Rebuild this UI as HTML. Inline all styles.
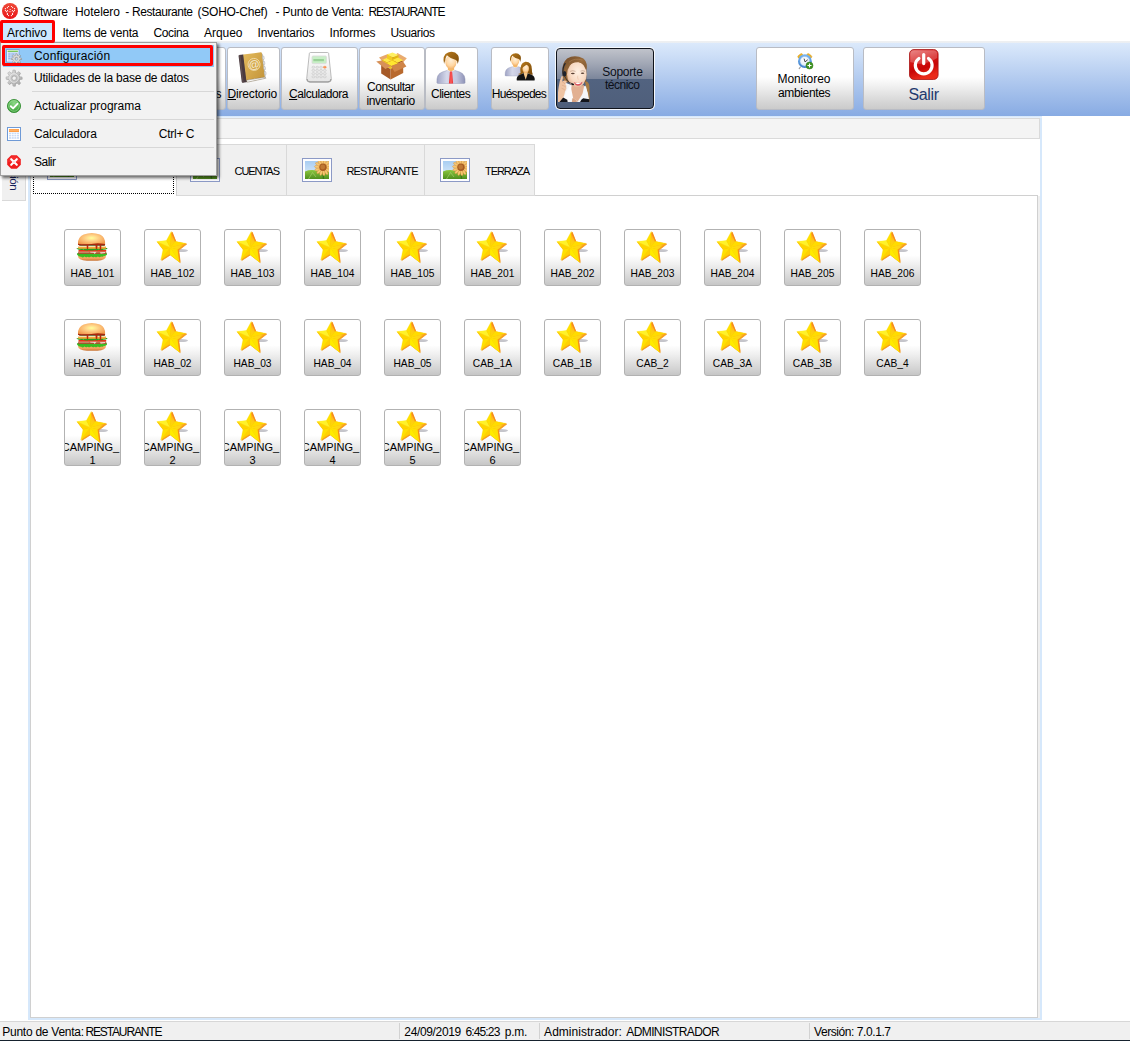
<!DOCTYPE html>
<html lang="es"><head><meta charset="utf-8"><title>Software Hotelero - Restaurante (SOHO-Chef)</title>
<style>
html,body{margin:0;padding:0;background:#fff;}
body{width:1130px;height:1041px;position:relative;overflow:hidden;font-family:"Liberation Sans",sans-serif;font-size:12px;color:#000;}
.a{position:absolute;box-sizing:border-box;}
.t{position:absolute;white-space:nowrap;font-family:"Liberation Sans",sans-serif;}
.i{position:absolute;overflow:visible;}
.tb{position:absolute;box-sizing:border-box;top:47px;height:63px;border:1px solid #b9bcc4;border-radius:3px;background:linear-gradient(#ffffff 0,#ffffff 47%,#f1f1f1 62%,#d6d6d6 88%,#cbcbcb 100%);}
.tile{position:absolute;box-sizing:border-box;width:57px;height:57px;border:1px solid #b2b2b2;border-radius:3px;background:linear-gradient(#ffffff 0,#ffffff 46%,#f0f0f0 62%,#d2d2d2 90%,#c6c6c6 100%);overflow:hidden;}
.tl{position:absolute;left:0;top:0;width:55px;font-size:11px;line-height:13.5px;text-align:center;white-space:nowrap;color:#000;transform:scaleX(0.93);transform-origin:27.3px 0;}
.tl2{position:absolute;left:-12px;width:75px;font-size:11px;line-height:13.5px;text-align:center;white-space:nowrap;color:#000;}
.sep{position:absolute;left:32px;width:182px;height:1px;background:#d7d7d7;}
</style></head>
<body>

<svg width="0" height="0" style="position:absolute">
<defs>
<linearGradient id="gStarO" x1="0.4" y1="0" x2="0.3" y2="1"><stop offset="0" stop-color="#ff8a1e"/><stop offset="0.45" stop-color="#ffc21a"/><stop offset="1" stop-color="#ffe000"/></linearGradient><linearGradient id="gStarR" x1="1" y1="0.5" x2="0" y2="0.5"><stop offset="0" stop-color="#ff9a1e"/><stop offset="0.4" stop-color="#ffd21a"/><stop offset="1" stop-color="#ffe400"/></linearGradient>
<radialGradient id="gBun" cx="0.45" cy="0.3" r="0.7"><stop offset="0" stop-color="#ffd9a0"/><stop offset="0.55" stop-color="#f6a24a"/><stop offset="1" stop-color="#d9782a"/></radialGradient>
<linearGradient id="gBun2" x1="0" y1="0" x2="0" y2="1"><stop offset="0" stop-color="#f8b366"/><stop offset="1" stop-color="#e08a3c"/></linearGradient>
<linearGradient id="gBook" x1="0" y1="0" x2="1" y2="1"><stop offset="0" stop-color="#e2b95c"/><stop offset="1" stop-color="#c4953a"/></linearGradient>
<linearGradient id="gCalc" x1="0" y1="0" x2="0" y2="1"><stop offset="0" stop-color="#ffffff"/><stop offset="1" stop-color="#e4e4e4"/></linearGradient>
<linearGradient id="gSuit" x1="0" y1="0" x2="1" y2="0"><stop offset="0" stop-color="#9ea3c4"/><stop offset="0.35" stop-color="#d5d8ea"/><stop offset="0.7" stop-color="#c2c5de"/><stop offset="1" stop-color="#8d92b6"/></linearGradient>
<radialGradient id="gFace" cx="0.5" cy="0.35" r="0.7"><stop offset="0" stop-color="#fff0da"/><stop offset="0.6" stop-color="#ffd7a3"/><stop offset="1" stop-color="#f0a85a"/></radialGradient>
<linearGradient id="gHair" x1="0" y1="0" x2="1" y2="1"><stop offset="0" stop-color="#b97b1c"/><stop offset="1" stop-color="#7a4a0a"/></linearGradient>
<linearGradient id="gPow" x1="0" y1="0" x2="0.3" y2="1"><stop offset="0" stop-color="#e46a6a"/><stop offset="0.45" stop-color="#d41414"/><stop offset="0.7" stop-color="#c80606"/><stop offset="1" stop-color="#ea2a1a"/></linearGradient>
<linearGradient id="gSky" x1="0" y1="0" x2="0" y2="1"><stop offset="0" stop-color="#a8cdf2"/><stop offset="1" stop-color="#e6f1fb"/></linearGradient>
<linearGradient id="gGrass" x1="0" y1="0" x2="0" y2="1"><stop offset="0" stop-color="#8cc63f"/><stop offset="1" stop-color="#4f8f1f"/></linearGradient>
<radialGradient id="gGreen" cx="0.5" cy="0.3" r="0.8"><stop offset="0" stop-color="#8fd98a"/><stop offset="0.6" stop-color="#4db04a"/><stop offset="1" stop-color="#2f8f2c"/></radialGradient>
<radialGradient id="gClock" cx="0.4" cy="0.35" r="0.8"><stop offset="0" stop-color="#ffffff"/><stop offset="1" stop-color="#d8e6f5"/></radialGradient>
<linearGradient id="gGear" x1="0" y1="0" x2="1" y2="1"><stop offset="0" stop-color="#e4e4e4"/><stop offset="1" stop-color="#a8a8a8"/></linearGradient>
</defs>
</svg>

<svg class="i" style="left:2px;top:3px" width="16" height="16" viewBox="0 0 16 16" ><defs><linearGradient id="gTi" x1="0" y1="0" x2="0" y2="1"><stop offset="0" stop-color="#ee4a38"/><stop offset="1" stop-color="#ea1418"/></linearGradient></defs><circle cx="8" cy="8" r="8" fill="url(#gTi)"/><circle cx="6.5" cy="3.5" r="0.62" fill="#fff"/><circle cx="5.4" cy="4.7" r="0.62" fill="#fff"/><circle cx="3.4" cy="5.7" r="0.62" fill="#fff"/><circle cx="3.4" cy="7.6" r="0.62" fill="#fff"/><circle cx="4.5" cy="8.7" r="0.62" fill="#fff"/><circle cx="5.5" cy="7.7" r="0.62" fill="#fff"/><circle cx="9.5" cy="3.5" r="0.62" fill="#fff"/><circle cx="10.6" cy="4.6" r="0.62" fill="#fff"/><circle cx="12.5" cy="5.7" r="0.62" fill="#fff"/><circle cx="12.5" cy="7.6" r="0.62" fill="#fff"/><circle cx="11.4" cy="8.7" r="0.62" fill="#fff"/><circle cx="10.4" cy="7.6" r="0.62" fill="#fff"/><circle cx="5.4" cy="11.4" r="0.62" fill="#fff"/><circle cx="6.5" cy="12.6" r="0.62" fill="#fff"/><circle cx="9.4" cy="12.6" r="0.62" fill="#fff"/><circle cx="10.5" cy="11.4" r="0.62" fill="#fff"/><circle cx="5.4" cy="10.3" r="0.62" fill="#fff"/><circle cx="10.5" cy="10.3" r="0.62" fill="#fff"/><path d="M6.6,6.7 L9,6.2 L9,7 Z" fill="#fff"/><rect x="6.6" y="8.5" width="2.8" height="0.6" fill="#fff" opacity="0.8"/></svg>
<span class="t" style="left:23.00px;top:4.00px;font-size:12px;line-height:16px;letter-spacing:-0.339px;color:#000;">Software</span>
<span class="t" style="left:75.00px;top:4.00px;font-size:12px;line-height:16px;letter-spacing:-0.054px;color:#000;">Hotelero</span>
<span class="t" style="left:125.20px;top:4.00px;font-size:12px;line-height:16px;letter-spacing:-0.800px;color:#000;">-</span>
<span class="t" style="left:132.00px;top:4.00px;font-size:12px;line-height:16px;letter-spacing:-0.438px;color:#000;">Restaurante</span>
<span class="t" style="left:197.60px;top:4.00px;font-size:12px;line-height:16px;letter-spacing:-0.262px;color:#000;">(SOHO-Chef)</span>
<span class="t" style="left:275.40px;top:4.00px;font-size:12px;line-height:16px;letter-spacing:-0.800px;color:#000;">-</span>
<span class="t" style="left:282.60px;top:4.00px;font-size:12px;line-height:16px;letter-spacing:-0.284px;color:#000;">Punto de Venta:</span>
<span class="t" style="left:368.40px;top:4.00px;font-size:12px;line-height:16px;letter-spacing:-1.130px;color:#000;">RESTAURANTE</span>
<span class="t" style="left:62.50px;top:24.50px;font-size:12px;line-height:16px;letter-spacing:-0.212px;color:#000;">Items de venta</span>
<span class="t" style="left:153.50px;top:24.50px;font-size:12px;line-height:16px;letter-spacing:-0.375px;color:#000;">Cocina</span>
<span class="t" style="left:204.00px;top:24.50px;font-size:12px;line-height:16px;letter-spacing:-0.050px;color:#000;">Arqueo</span>
<span class="t" style="left:257.50px;top:24.50px;font-size:12px;line-height:16px;letter-spacing:-0.175px;color:#000;">Inventarios</span>
<span class="t" style="left:329.50px;top:24.50px;font-size:12px;line-height:16px;letter-spacing:-0.089px;color:#000;">Informes</span>
<span class="t" style="left:390.50px;top:24.50px;font-size:12px;line-height:16px;letter-spacing:-0.411px;color:#000;">Usuarios</span>
<div class="a" style="left:0;top:41px;width:1130px;height:2px;background:linear-gradient(#f0f0f0,#e9eef5);"></div>
<div class="a" style="left:0;top:43px;width:1130px;height:73px;background:linear-gradient(#dbe9fb 0,#88abe3 100%);"></div>
<div class="tb" style="left:170px;width:56px;"></div>
<span class="t" style="left:215.50px;top:86.00px;font-size:12px;line-height:16px;letter-spacing:-1.200px;color:#000;">s</span>
<div class="tb" style="left:227px;width:53px;"></div>
<svg class="i" style="left:238px;top:51px" width="31.2" height="34.3" viewBox="0 0 30 33" ><g transform="rotate(-7 15 16)"><path d="M6.2,3.5 L24,3.5 Q25,3.5 25,4.5 L25,27.2 L7,28.6 L6.2,28.6Z" fill="#f2f2f2" stroke="#8d8d8d" stroke-width="0.5"/><rect x="2" y="2.2" width="5.2" height="27" rx="1" fill="#4a3b3f"/><rect x="2.6" y="2.2" width="1.2" height="27" fill="#6a585a" opacity="0.7"/><path d="M6.6,2.2 L23.6,2.2 Q24.6,2.2 24.6,3.2 L24.6,26.4 L6.6,27.2Z" fill="url(#gBook)"/><path d="M6.6,27.2 L24.6,26.4 L25.4,27.6 L7.2,29.2Z" fill="#fafafa" stroke="#7d6a4a" stroke-width="0.4"/><rect x="24.6" y="6.0" width="1.6" height="3.4" rx="0.8" fill="#e8e8e8" stroke="#9a9a9a" stroke-width="0.4"/><rect x="24.6" y="11.0" width="1.6" height="3.4" rx="0.8" fill="#e8e8e8" stroke="#9a9a9a" stroke-width="0.4"/><rect x="24.6" y="16.0" width="1.6" height="3.4" rx="0.8" fill="#e8e8e8" stroke="#9a9a9a" stroke-width="0.4"/><rect x="24.6" y="21.0" width="1.6" height="3.4" rx="0.8" fill="#e8e8e8" stroke="#9a9a9a" stroke-width="0.4"/><circle cx="15.8" cy="13" r="5.8" fill="none" stroke="#efd9a8" stroke-width="0.9"/><text x="15.8" y="16.6" font-family="Liberation Sans, sans-serif" font-size="10.5" font-weight="bold" fill="#f6ecd2" text-anchor="middle">@</text></g></svg>
<span class="t" style="left:227.50px;top:86.00px;font-size:12px;line-height:16px;letter-spacing:-0.175px;color:#000;"><u>D</u>irectorio</span>
<div class="tb" style="left:281px;width:77px;"></div>
<svg class="i" style="left:306px;top:52px" width="26" height="31" viewBox="0 0 26 31" ><path d="M3.4,1.2 Q3.6,0.5 4.6,0.5 L21.4,0.5 Q22.4,0.5 22.6,1.2 L25.3,26.6 Q25.6,30.2 22,30.4 L4,30.4 Q0.4,30.2 0.7,26.6Z" fill="url(#gCalc)" stroke="#b4b4b4" stroke-width="0.9"/><path d="M1,27 Q1.2,29.6 4,29.8 L22,29.8 Q24.8,29.6 25,27" fill="none" stroke="#9c9c9c" stroke-width="1.1"/><rect x="6" y="4" width="14.4" height="7.6" rx="1" fill="#c8efc6" stroke="#d9d9d9" stroke-width="0.8"/><rect x="7.4" y="7" width="10.5" height="2.2" fill="#8fc98c" opacity="0.8"/><ellipse cx="7.4" cy="15.2" rx="1.5" ry="1.0" fill="#e9e9e9" stroke="#bdbdbd" stroke-width="0.45"/><ellipse cx="11.2" cy="15.2" rx="1.5" ry="1.0" fill="#e9e9e9" stroke="#bdbdbd" stroke-width="0.45"/><ellipse cx="15.0" cy="15.2" rx="1.5" ry="1.0" fill="#e9e9e9" stroke="#bdbdbd" stroke-width="0.45"/><ellipse cx="18.8" cy="15.2" rx="1.5" ry="1.0" fill="#ff9a5c" stroke="#f07a3a" stroke-width="0.45"/><ellipse cx="7.4" cy="18.4" rx="1.5" ry="1.0" fill="#e9e9e9" stroke="#bdbdbd" stroke-width="0.45"/><ellipse cx="11.2" cy="18.4" rx="1.5" ry="1.0" fill="#e9e9e9" stroke="#bdbdbd" stroke-width="0.45"/><ellipse cx="15.0" cy="18.4" rx="1.5" ry="1.0" fill="#e9e9e9" stroke="#bdbdbd" stroke-width="0.45"/><ellipse cx="18.8" cy="18.4" rx="1.5" ry="1.0" fill="#e9e9e9" stroke="#bdbdbd" stroke-width="0.45"/><ellipse cx="7.4" cy="21.6" rx="1.5" ry="1.0" fill="#e9e9e9" stroke="#bdbdbd" stroke-width="0.45"/><ellipse cx="11.2" cy="21.6" rx="1.5" ry="1.0" fill="#e9e9e9" stroke="#bdbdbd" stroke-width="0.45"/><ellipse cx="15.0" cy="21.6" rx="1.5" ry="1.0" fill="#e9e9e9" stroke="#bdbdbd" stroke-width="0.45"/><ellipse cx="18.8" cy="21.6" rx="1.5" ry="1.0" fill="#e9e9e9" stroke="#bdbdbd" stroke-width="0.45"/><ellipse cx="7.4" cy="24.8" rx="1.5" ry="1.0" fill="#e9e9e9" stroke="#bdbdbd" stroke-width="0.45"/><ellipse cx="11.2" cy="24.8" rx="1.5" ry="1.0" fill="#e9e9e9" stroke="#bdbdbd" stroke-width="0.45"/><ellipse cx="15.0" cy="24.8" rx="1.5" ry="1.0" fill="#e9e9e9" stroke="#bdbdbd" stroke-width="0.45"/><ellipse cx="18.8" cy="24.8" rx="1.5" ry="1.0" fill="#e9e9e9" stroke="#bdbdbd" stroke-width="0.45"/></svg>
<span class="t" style="left:289.00px;top:86.00px;font-size:12px;line-height:16px;letter-spacing:-0.452px;color:#000;"><u>C</u>alculadora</span>
<div class="tb" style="left:359px;width:66px;"></div>
<svg class="i" style="left:376px;top:51.5px" width="31" height="28" viewBox="0 0 31 28" ><path d="M3,5.5 L12.5,1.8 L16,5 L6,9Z" fill="#e7a76a"/><path d="M21.5,1 L30.8,6.2 L27,10.5 L17.5,4.6Z" fill="#e9ab70"/><path d="M5.5,8.5 L16.5,4 L27,9.6 L16,15Z" fill="#a55a26"/><path d="M6,8 L11.5,5.6 L16.5,8 L11,10.6Z" fill="#ffe84a"/><path d="M6,8 L11,10.6 L11,14 L6,11.5Z" fill="#f0c81c"/><path d="M11,2.6 L16.5,0.4 L22.5,3 L16.8,5.6Z" fill="#fff060"/><path d="M11,2.6 L16.8,5.6 L16.8,9.4 L11,6.4Z" fill="#f2cc20"/><path d="M16.8,5.6 L22.5,3 L22.5,6.6 L16.8,9.4Z" fill="#e3b810"/><path d="M16.5,8 L22,5.6 L27,8.2 L21.5,10.8Z" fill="#ffe540"/><path d="M16.5,8 L21.5,10.8 L21.5,14.2 L16.5,11.6Z" fill="#eec41a"/><path d="M10,11 L16,8.6 L21.8,11.4 L15.6,14.2Z" fill="#ffe630"/><path d="M10,11 L15.6,14.2 L15.6,17.4 L10,14.4Z" fill="#efc51a"/><path d="M15.6,14.2 L21.8,11.4 L21.8,14.6 L15.6,17.4Z" fill="#dcae10"/><path d="M5.2,12.2 L14.6,17 L14.6,27.6 L5.2,21.6Z" fill="#a65a28"/><path d="M14.6,17 L27.2,10.6 L27.2,21 L14.6,27.6Z" fill="#b8692e"/><path d="M0.2,9.6 L5.6,8.4 L15,14 L9.4,17Z" fill="#d79158"/><path d="M15,14 L27,9.4 L30.4,14.6 L18.6,20Z" fill="#cf8448"/></svg>
<span class="t" style="left:367.00px;top:79.00px;font-size:12px;line-height:16px;letter-spacing:-0.447px;color:#000;">Consultar</span>
<span class="t" style="left:366.40px;top:93.00px;font-size:12px;line-height:16px;letter-spacing:-0.356px;color:#000;">inventario</span>
<div class="tb" style="left:425px;width:53px;"></div>
<svg class="i" style="left:436px;top:50.6px" width="30" height="33" viewBox="0 0 30 33" ><g transform="translate(0.50 0.50) scale(1.000)"><path d="M0.4,31.2 Q-0.2,22.6 5.6,20.6 L11,18.8 L18,18.8 L23.4,20.6 Q29.2,22.6 28.6,31.2 Q28.4,32 27.4,32 L1.6,32 Q0.6,32 0.4,31.2Z" fill="url(#gSuit)" stroke="#8a8fae" stroke-width="0.4"/><path d="M10.4,18.6 L14.4,20.6 L18.6,18.6 L17,17.4 L12,17.4Z" fill="#fff"/><path d="M11.4,14.5 L17.6,14.5 L17.6,18.6 L14.5,20 L11.4,18.6Z" fill="#f5b868"/><path d="M13.4,20 L15.6,20 L16.6,32 L12.4,32Z" fill="#f23a3a"/><path d="M14.2,20 L15,20 L15.2,32 L13.8,32Z" fill="#ff7a7a" opacity="0.6"/><ellipse cx="14.4" cy="10.6" rx="5.6" ry="7" fill="url(#gFace)"/><path d="M7.6,12.5 Q5.4,3.4 11.6,1 Q17.6,-1.2 21.4,3.4 Q23.4,6.6 21.2,12.6 Q21,9 19.4,8.4 Q14,7.4 10.4,3.8 Q8.6,7 8.6,9.4 Q8,10.4 7.6,12.5Z" fill="url(#gHair)"/></g></svg>
<span class="t" style="left:431.00px;top:86.00px;font-size:12px;line-height:16px;letter-spacing:-0.525px;color:#000;">Clientes</span>
<div class="tb" style="left:491px;width:58px;"></div>
<svg class="i" style="left:504px;top:52px" width="32" height="31" viewBox="0 0 32 31" ><g transform="translate(0.86 1.00) scale(0.720)"><path d="M0.4,31.2 Q-0.2,22.6 5.6,20.6 L11,18.8 L18,18.8 L23.4,20.6 Q29.2,22.6 28.6,31.2 Q28.4,32 27.4,32 L1.6,32 Q0.6,32 0.4,31.2Z" fill="url(#gSuit)" stroke="#8a8fae" stroke-width="0.4"/><path d="M10.4,18.6 L14.4,20.6 L18.6,18.6 L17,17.4 L12,17.4Z" fill="#fff"/><path d="M11.4,14.5 L17.6,14.5 L17.6,18.6 L14.5,20 L11.4,18.6Z" fill="#f5b868"/><ellipse cx="14.4" cy="10.6" rx="5.6" ry="7" fill="url(#gFace)"/><path d="M7.6,12.5 Q5.4,3.4 11.6,1 Q17.6,-1.2 21.4,3.4 Q23.4,6.6 21.2,12.6 Q21,9 19.4,8.4 Q14,7.4 10.4,3.8 Q8.6,7 8.6,9.4 Q8,10.4 7.6,12.5Z" fill="url(#gHair)"/></g><g transform="translate(12.30 9.30) scale(0.940)"><path d="M4.6,12.4 Q3,2 9.6,0.4 Q16.6,0 16.6,8.6 Q16.4,12 17.6,14 Q15,15 13.4,13 L6.4,13 Q5,15.4 1.8,13.6 Q4,12.6 4.6,12.4Z" fill="url(#gHair)"/><path d="M0.4,19.8 Q0,15.4 4,14.2 L8,12.8 L12,12.8 L16,14.2 Q20,15.4 19.6,19.8 Q19.5,20.4 18.8,20.4 L1.2,20.4 Q0.5,20.4 0.4,19.8Z" fill="#141414"/><path d="M8,11 L12,11 L12,13.4 L10,19.6 L8,13.4Z" fill="#f7c88a"/><ellipse cx="10" cy="7.6" rx="3.4" ry="4.7" fill="url(#gFace)"/><path d="M5.8,7.4 Q5.4,2.2 10,2 Q14.4,2.2 14.4,7.6 Q13.4,4.4 10.8,3.8 Q8,5.6 5.8,7.4Z" fill="url(#gHair)"/></g></svg>
<span class="t" style="left:491.70px;top:86.00px;font-size:12px;line-height:16px;letter-spacing:-0.694px;color:#000;">Huéspedes</span>
<div class="a" style="left:555px;top:47px;width:100px;height:63px;border-radius:5px;background:#f6f9fd;"></div>
<div class="a" style="left:556px;top:48px;width:98px;height:61px;border:1px solid #10141c;border-radius:4px;background:linear-gradient(#c0c3cb 0,#a1a7b5 25%,#7c869b 50.5%,#526380 51.5%,#4f5f7b 100%);overflow:hidden;"></div>
<svg class="i" style="left:557.5px;top:55.5px" width="31.8356" height="45.8891" viewBox="55 125 333 480" ><defs><clipPath id="cpW"><rect x="55" y="125" width="333" height="480"/></clipPath><radialGradient id="gSkin" cx="0.55" cy="0.4" r="0.75"><stop offset="0" stop-color="#fff1e4"/><stop offset="0.55" stop-color="#f8d9c2"/><stop offset="1" stop-color="#d9a07a"/></radialGradient><linearGradient id="gHr" x1="0" y1="0" x2="1" y2="1"><stop offset="0" stop-color="#6e4a2a"/><stop offset="0.5" stop-color="#9a6c3c"/><stop offset="1" stop-color="#7c5530"/></linearGradient></defs><g clip-path="url(#cpW)"><path d="M104,330 Q84,210 150,150 Q230,105 320,150 Q365,185 352,260 L350,400 L120,400Z" fill="url(#gHr)"/><path d="M338,395 Q372,380 384,440 L388,605 L350,605 Q366,520 338,395Z" fill="#a87a42"/><path d="M70,605 Q85,520 150,470 L340,440 Q375,520 384,605Z" fill="#f4f4f6"/><path d="M170,430 L330,430 L312,520 L262,600 L206,560Z" fill="#e2b092"/><path d="M206,560 L262,600 L240,605 L200,605Z" fill="#d9a482"/><path d="M120,400 L200,430 L190,480 L130,500Z" fill="#f4f4f6"/><path d="M120,556 Q150,470 186,430 L212,560 L176,605 L140,590Z" fill="#fbfbfd"/><path d="M345,430 Q368,500 372,580 L300,605 L290,590Z" fill="#f6f6fa"/><path d="M62,605 Q74,575 104,556 L152,582 L156,605Z" fill="#14161c"/><path d="M286,605 Q296,580 318,566 L384,578 L386,605Z" fill="#14161c"/><ellipse cx="252" cy="318" rx="102" ry="134" fill="url(#gSkin)"/><path d="M132,290 Q122,190 200,150 Q290,120 346,190 Q358,225 352,270 Q336,206 270,190 Q196,186 156,240 Q142,262 132,290Z" fill="url(#gHr)"/><path d="M170,190 Q230,140 310,168" fill="none" stroke="#b88a58" stroke-width="10" opacity="0.5"/><ellipse cx="210" cy="308" rx="20" ry="8" fill="#5a4034"/><ellipse cx="312" cy="306" rx="18" ry="8" fill="#5a4034"/><path d="M182,286 Q210,272 238,286" stroke="#7a583e" stroke-width="5" fill="none" opacity="0.7"/><path d="M290,284 Q314,272 338,286" stroke="#7a583e" stroke-width="5" fill="none" opacity="0.7"/><path d="M262,330 Q256,360 268,372" stroke="#e0ac8c" stroke-width="6" fill="none" opacity="0.7"/><path d="M220,400 Q266,416 312,394 Q300,434 262,436 Q232,432 220,400Z" fill="#d8505a"/><path d="M232,404 Q266,414 302,400 Q296,416 264,420 Q240,418 232,404Z" fill="#fff"/><path d="M132,200 Q96,250 110,330" fill="none" stroke="#20242e" stroke-width="13"/><ellipse cx="124" cy="312" rx="18" ry="30" fill="#1e222c"/><path d="M128,340 Q150,400 206,416" fill="none" stroke="#222630" stroke-width="7"/><ellipse cx="208" cy="420" rx="16" ry="9" fill="#14161c" transform="rotate(20 208 420)"/><path d="M55,605 Q50,520 62,450 Q70,380 92,336 Q104,330 106,350 L100,392 Q128,372 144,386 Q152,404 130,420 Q150,430 140,452 Q150,470 132,486 Q120,540 110,560 L70,605Z" fill="#efc4a4"/><path d="M98,394 Q118,404 130,420 M96,430 Q120,436 140,452 M92,462 Q114,470 132,486" stroke="#c98e6c" stroke-width="5" fill="none" opacity="0.7"/></g></svg>
<span class="t" style="left:602.20px;top:63.70px;font-size:12px;line-height:16px;letter-spacing:-0.233px;color:#0c0f18;">Soporte</span>
<span class="t" style="left:605.00px;top:76.50px;font-size:12px;line-height:16px;letter-spacing:-0.500px;color:#0c0f18;">técnico</span>
<div class="tb" style="left:756px;width:98px;"></div>
<svg class="i" style="left:797px;top:53px" width="17" height="17" viewBox="0 0 17 17" ><defs><linearGradient id="gClkF" x1="0" y1="0" x2="0" y2="1"><stop offset="0" stop-color="#7ab6f0"/><stop offset="1" stop-color="#3c7ecb"/></linearGradient></defs><rect x="0.6" y="1.4" width="5.6" height="3.2" rx="1.5" transform="rotate(-38 3.4 3)" fill="#f0b224" stroke="#d6960e" stroke-width="0.4"/><rect x="9.4" y="1.4" width="5.6" height="3.2" rx="1.5" transform="rotate(38 12.2 3)" fill="#f0b224" stroke="#d6960e" stroke-width="0.4"/><path d="M3.4,14 L2.2,15.6" stroke="#9a9a9a" stroke-width="1.1" stroke-linecap="round"/><circle cx="7.9" cy="8.2" r="6.9" fill="url(#gClkF)"/><circle cx="7.9" cy="8.2" r="4.8" fill="url(#gClock)" stroke="#9cc4f0" stroke-width="0.5"/><path d="M7.2,6.0 L8,8.9 L10.4,7.0" stroke="#4a4a4a" stroke-width="1.0" fill="none" stroke-linejoin="round" stroke-linecap="round"/><circle cx="12.5" cy="12.5" r="3.5" fill="#3f9422" stroke="#2a7414" stroke-width="0.5"/><path d="M10.5,12.5 L14.5,12.5 M12.5,10.5 L12.5,14.5" stroke="#fff" stroke-width="1.1"/></svg>
<span class="t" style="left:777.50px;top:71.00px;font-size:12px;line-height:16px;letter-spacing:-0.047px;color:#000;">Monitoreo</span>
<span class="t" style="left:778.00px;top:84.60px;font-size:12px;line-height:16px;letter-spacing:-0.359px;color:#000;">ambientes</span>
<div class="tb" style="left:863px;width:122px;"></div>
<svg class="i" style="left:909px;top:49px" width="30" height="31" viewBox="0 0 30 31" ><rect x="0.5" y="0.5" width="28.6" height="30" rx="4.5" fill="url(#gPow)" stroke="#a81414" stroke-width="0.8"/><path d="M1.4,13 Q14,18 28.2,9 L28.2,5 Q28.2,1.4 25,1.4 L5,1.4 Q1.4,1.4 1.4,5Z" fill="#fff" opacity="0.22"/><path d="M9.9,9.5 A8.4,8.4 0 1 0 19.5,9.5" fill="none" stroke="#fff" stroke-width="3.2" stroke-linecap="round"/><path d="M14.7,5.6 L14.7,14.6" stroke="#fff" stroke-width="3.2" stroke-linecap="round"/></svg>
<span class="t" style="left:908.60px;top:84.60px;font-size:16px;line-height:19px;letter-spacing:-0.400px;color:#1f3a6e;">Salir</span>
<div class="a" style="left:28px;top:116px;width:1014px;height:904px;border:2px solid #d6e8fb;background:#fff;"></div>
<div class="a" style="left:0;top:116px;width:1042px;height:2px;background:linear-gradient(#d2e5fa,#ecf4fd);"></div>
<div class="a" style="left:30px;top:118px;width:1010px;height:21px;border:1px solid #dadada;background:#f4f4f4;"></div>
<div class="a" style="left:1038px;top:196px;width:2px;height:822px;background:#efefef;"></div>
<div class="a" style="left:30px;top:195px;width:1008px;height:823px;border:1px solid #d0d0d0;background:#fff;"></div>
<div class="a" style="left:176px;top:144px;width:359px;height:52px;border:1px solid #d9d9d9;border-left:none;background:#f0f0f0;"></div>
<div class="a" style="left:286px;top:145px;width:1px;height:50px;background:#d9d9d9;"></div>
<div class="a" style="left:424px;top:145px;width:1px;height:50px;background:#d9d9d9;"></div>
<div class="a" style="left:30px;top:142px;width:147px;height:54px;border:1px solid #d0d0d0;border-bottom:none;background:#fff;"></div>
<div class="a" style="left:33px;top:146px;width:141px;height:48px;border:1px dotted #000;"></div>
<svg class="i" style="left:47px;top:156px" width="30" height="24" viewBox="0 0 30 24" ><defs><clipPath id="cpS1"><rect x="3" y="3" width="24" height="18"/></clipPath></defs><rect x="0.5" y="0.5" width="29" height="23" fill="#fdfdff" stroke="#8c9ac6"/><rect x="3" y="3" width="24" height="18" fill="url(#gSky)"/><g clip-path="url(#cpS1)"><path d="M3,13.5 Q9,11 16,13 Q22,14.5 27,12.5 L27,21 L3,21Z" fill="url(#gGrass)"/><path d="M6.5,21 L10.5,14.5 L14,19" fill="none" stroke="#a8d070" stroke-width="0.8" opacity="0.8"/><path d="M21.5,21 L21,15" stroke="#3c7a1a" stroke-width="1.3"/><ellipse cx="26.67" cy="9.87" rx="2.9" ry="1.3" transform="rotate(5.7 26.67 9.87)" fill="#f7c673" stroke="#cf8a2c" stroke-width="0.35"/><ellipse cx="25.86" cy="12.27" rx="2.9" ry="1.3" transform="rotate(31.4 25.86 12.27)" fill="#f7c673" stroke="#cf8a2c" stroke-width="0.35"/><ellipse cx="24.09" cy="14.09" rx="2.9" ry="1.3" transform="rotate(57.2 24.09 14.09)" fill="#f7c673" stroke="#cf8a2c" stroke-width="0.35"/><ellipse cx="21.71" cy="14.96" rx="2.9" ry="1.3" transform="rotate(82.9 21.71 14.96)" fill="#f7c673" stroke="#cf8a2c" stroke-width="0.35"/><ellipse cx="19.18" cy="14.70" rx="2.9" ry="1.3" transform="rotate(108.6 19.18 14.70)" fill="#f7c673" stroke="#cf8a2c" stroke-width="0.35"/><ellipse cx="17.02" cy="13.38" rx="2.9" ry="1.3" transform="rotate(134.3 17.02 13.38)" fill="#f7c673" stroke="#cf8a2c" stroke-width="0.35"/><ellipse cx="15.64" cy="11.25" rx="2.9" ry="1.3" transform="rotate(160.0 15.64 11.25)" fill="#f7c673" stroke="#cf8a2c" stroke-width="0.35"/><ellipse cx="15.33" cy="8.73" rx="2.9" ry="1.3" transform="rotate(185.7 15.33 8.73)" fill="#f7c673" stroke="#cf8a2c" stroke-width="0.35"/><ellipse cx="16.14" cy="6.33" rx="2.9" ry="1.3" transform="rotate(211.4 16.14 6.33)" fill="#f7c673" stroke="#cf8a2c" stroke-width="0.35"/><ellipse cx="17.91" cy="4.51" rx="2.9" ry="1.3" transform="rotate(237.2 17.91 4.51)" fill="#f7c673" stroke="#cf8a2c" stroke-width="0.35"/><ellipse cx="20.29" cy="3.64" rx="2.9" ry="1.3" transform="rotate(262.9 20.29 3.64)" fill="#f7c673" stroke="#cf8a2c" stroke-width="0.35"/><ellipse cx="22.82" cy="3.90" rx="2.9" ry="1.3" transform="rotate(288.6 22.82 3.90)" fill="#f7c673" stroke="#cf8a2c" stroke-width="0.35"/><ellipse cx="24.98" cy="5.22" rx="2.9" ry="1.3" transform="rotate(314.3 24.98 5.22)" fill="#f7c673" stroke="#cf8a2c" stroke-width="0.35"/><ellipse cx="26.36" cy="7.35" rx="2.9" ry="1.3" transform="rotate(340.0 26.36 7.35)" fill="#f7c673" stroke="#cf8a2c" stroke-width="0.35"/><circle cx="21.0" cy="9.3" r="3.7" fill="#a85c22"/><circle cx="20.7" cy="9.0" r="2.4" fill="#bf7834"/></g></svg>
<svg class="i" style="left:190px;top:158px" width="30" height="24" viewBox="0 0 30 24" ><defs><clipPath id="cpS2"><rect x="3" y="3" width="24" height="18"/></clipPath></defs><rect x="0.5" y="0.5" width="29" height="23" fill="#fdfdff" stroke="#8c9ac6"/><rect x="3" y="3" width="24" height="18" fill="url(#gSky)"/><g clip-path="url(#cpS2)"><path d="M3,13.5 Q9,11 16,13 Q22,14.5 27,12.5 L27,21 L3,21Z" fill="url(#gGrass)"/><path d="M6.5,21 L10.5,14.5 L14,19" fill="none" stroke="#a8d070" stroke-width="0.8" opacity="0.8"/><path d="M21.5,21 L21,15" stroke="#3c7a1a" stroke-width="1.3"/><ellipse cx="26.67" cy="9.87" rx="2.9" ry="1.3" transform="rotate(5.7 26.67 9.87)" fill="#f7c673" stroke="#cf8a2c" stroke-width="0.35"/><ellipse cx="25.86" cy="12.27" rx="2.9" ry="1.3" transform="rotate(31.4 25.86 12.27)" fill="#f7c673" stroke="#cf8a2c" stroke-width="0.35"/><ellipse cx="24.09" cy="14.09" rx="2.9" ry="1.3" transform="rotate(57.2 24.09 14.09)" fill="#f7c673" stroke="#cf8a2c" stroke-width="0.35"/><ellipse cx="21.71" cy="14.96" rx="2.9" ry="1.3" transform="rotate(82.9 21.71 14.96)" fill="#f7c673" stroke="#cf8a2c" stroke-width="0.35"/><ellipse cx="19.18" cy="14.70" rx="2.9" ry="1.3" transform="rotate(108.6 19.18 14.70)" fill="#f7c673" stroke="#cf8a2c" stroke-width="0.35"/><ellipse cx="17.02" cy="13.38" rx="2.9" ry="1.3" transform="rotate(134.3 17.02 13.38)" fill="#f7c673" stroke="#cf8a2c" stroke-width="0.35"/><ellipse cx="15.64" cy="11.25" rx="2.9" ry="1.3" transform="rotate(160.0 15.64 11.25)" fill="#f7c673" stroke="#cf8a2c" stroke-width="0.35"/><ellipse cx="15.33" cy="8.73" rx="2.9" ry="1.3" transform="rotate(185.7 15.33 8.73)" fill="#f7c673" stroke="#cf8a2c" stroke-width="0.35"/><ellipse cx="16.14" cy="6.33" rx="2.9" ry="1.3" transform="rotate(211.4 16.14 6.33)" fill="#f7c673" stroke="#cf8a2c" stroke-width="0.35"/><ellipse cx="17.91" cy="4.51" rx="2.9" ry="1.3" transform="rotate(237.2 17.91 4.51)" fill="#f7c673" stroke="#cf8a2c" stroke-width="0.35"/><ellipse cx="20.29" cy="3.64" rx="2.9" ry="1.3" transform="rotate(262.9 20.29 3.64)" fill="#f7c673" stroke="#cf8a2c" stroke-width="0.35"/><ellipse cx="22.82" cy="3.90" rx="2.9" ry="1.3" transform="rotate(288.6 22.82 3.90)" fill="#f7c673" stroke="#cf8a2c" stroke-width="0.35"/><ellipse cx="24.98" cy="5.22" rx="2.9" ry="1.3" transform="rotate(314.3 24.98 5.22)" fill="#f7c673" stroke="#cf8a2c" stroke-width="0.35"/><ellipse cx="26.36" cy="7.35" rx="2.9" ry="1.3" transform="rotate(340.0 26.36 7.35)" fill="#f7c673" stroke="#cf8a2c" stroke-width="0.35"/><circle cx="21.0" cy="9.3" r="3.7" fill="#a85c22"/><circle cx="20.7" cy="9.0" r="2.4" fill="#bf7834"/></g></svg>
<svg class="i" style="left:302px;top:158px" width="30" height="24" viewBox="0 0 30 24" ><defs><clipPath id="cpS3"><rect x="3" y="3" width="24" height="18"/></clipPath></defs><rect x="0.5" y="0.5" width="29" height="23" fill="#fdfdff" stroke="#8c9ac6"/><rect x="3" y="3" width="24" height="18" fill="url(#gSky)"/><g clip-path="url(#cpS3)"><path d="M3,13.5 Q9,11 16,13 Q22,14.5 27,12.5 L27,21 L3,21Z" fill="url(#gGrass)"/><path d="M6.5,21 L10.5,14.5 L14,19" fill="none" stroke="#a8d070" stroke-width="0.8" opacity="0.8"/><path d="M21.5,21 L21,15" stroke="#3c7a1a" stroke-width="1.3"/><ellipse cx="26.67" cy="9.87" rx="2.9" ry="1.3" transform="rotate(5.7 26.67 9.87)" fill="#f7c673" stroke="#cf8a2c" stroke-width="0.35"/><ellipse cx="25.86" cy="12.27" rx="2.9" ry="1.3" transform="rotate(31.4 25.86 12.27)" fill="#f7c673" stroke="#cf8a2c" stroke-width="0.35"/><ellipse cx="24.09" cy="14.09" rx="2.9" ry="1.3" transform="rotate(57.2 24.09 14.09)" fill="#f7c673" stroke="#cf8a2c" stroke-width="0.35"/><ellipse cx="21.71" cy="14.96" rx="2.9" ry="1.3" transform="rotate(82.9 21.71 14.96)" fill="#f7c673" stroke="#cf8a2c" stroke-width="0.35"/><ellipse cx="19.18" cy="14.70" rx="2.9" ry="1.3" transform="rotate(108.6 19.18 14.70)" fill="#f7c673" stroke="#cf8a2c" stroke-width="0.35"/><ellipse cx="17.02" cy="13.38" rx="2.9" ry="1.3" transform="rotate(134.3 17.02 13.38)" fill="#f7c673" stroke="#cf8a2c" stroke-width="0.35"/><ellipse cx="15.64" cy="11.25" rx="2.9" ry="1.3" transform="rotate(160.0 15.64 11.25)" fill="#f7c673" stroke="#cf8a2c" stroke-width="0.35"/><ellipse cx="15.33" cy="8.73" rx="2.9" ry="1.3" transform="rotate(185.7 15.33 8.73)" fill="#f7c673" stroke="#cf8a2c" stroke-width="0.35"/><ellipse cx="16.14" cy="6.33" rx="2.9" ry="1.3" transform="rotate(211.4 16.14 6.33)" fill="#f7c673" stroke="#cf8a2c" stroke-width="0.35"/><ellipse cx="17.91" cy="4.51" rx="2.9" ry="1.3" transform="rotate(237.2 17.91 4.51)" fill="#f7c673" stroke="#cf8a2c" stroke-width="0.35"/><ellipse cx="20.29" cy="3.64" rx="2.9" ry="1.3" transform="rotate(262.9 20.29 3.64)" fill="#f7c673" stroke="#cf8a2c" stroke-width="0.35"/><ellipse cx="22.82" cy="3.90" rx="2.9" ry="1.3" transform="rotate(288.6 22.82 3.90)" fill="#f7c673" stroke="#cf8a2c" stroke-width="0.35"/><ellipse cx="24.98" cy="5.22" rx="2.9" ry="1.3" transform="rotate(314.3 24.98 5.22)" fill="#f7c673" stroke="#cf8a2c" stroke-width="0.35"/><ellipse cx="26.36" cy="7.35" rx="2.9" ry="1.3" transform="rotate(340.0 26.36 7.35)" fill="#f7c673" stroke="#cf8a2c" stroke-width="0.35"/><circle cx="21.0" cy="9.3" r="3.7" fill="#a85c22"/><circle cx="20.7" cy="9.0" r="2.4" fill="#bf7834"/></g></svg>
<svg class="i" style="left:440px;top:158px" width="30" height="24" viewBox="0 0 30 24" ><defs><clipPath id="cpS4"><rect x="3" y="3" width="24" height="18"/></clipPath></defs><rect x="0.5" y="0.5" width="29" height="23" fill="#fdfdff" stroke="#8c9ac6"/><rect x="3" y="3" width="24" height="18" fill="url(#gSky)"/><g clip-path="url(#cpS4)"><path d="M3,13.5 Q9,11 16,13 Q22,14.5 27,12.5 L27,21 L3,21Z" fill="url(#gGrass)"/><path d="M6.5,21 L10.5,14.5 L14,19" fill="none" stroke="#a8d070" stroke-width="0.8" opacity="0.8"/><path d="M21.5,21 L21,15" stroke="#3c7a1a" stroke-width="1.3"/><ellipse cx="26.67" cy="9.87" rx="2.9" ry="1.3" transform="rotate(5.7 26.67 9.87)" fill="#f7c673" stroke="#cf8a2c" stroke-width="0.35"/><ellipse cx="25.86" cy="12.27" rx="2.9" ry="1.3" transform="rotate(31.4 25.86 12.27)" fill="#f7c673" stroke="#cf8a2c" stroke-width="0.35"/><ellipse cx="24.09" cy="14.09" rx="2.9" ry="1.3" transform="rotate(57.2 24.09 14.09)" fill="#f7c673" stroke="#cf8a2c" stroke-width="0.35"/><ellipse cx="21.71" cy="14.96" rx="2.9" ry="1.3" transform="rotate(82.9 21.71 14.96)" fill="#f7c673" stroke="#cf8a2c" stroke-width="0.35"/><ellipse cx="19.18" cy="14.70" rx="2.9" ry="1.3" transform="rotate(108.6 19.18 14.70)" fill="#f7c673" stroke="#cf8a2c" stroke-width="0.35"/><ellipse cx="17.02" cy="13.38" rx="2.9" ry="1.3" transform="rotate(134.3 17.02 13.38)" fill="#f7c673" stroke="#cf8a2c" stroke-width="0.35"/><ellipse cx="15.64" cy="11.25" rx="2.9" ry="1.3" transform="rotate(160.0 15.64 11.25)" fill="#f7c673" stroke="#cf8a2c" stroke-width="0.35"/><ellipse cx="15.33" cy="8.73" rx="2.9" ry="1.3" transform="rotate(185.7 15.33 8.73)" fill="#f7c673" stroke="#cf8a2c" stroke-width="0.35"/><ellipse cx="16.14" cy="6.33" rx="2.9" ry="1.3" transform="rotate(211.4 16.14 6.33)" fill="#f7c673" stroke="#cf8a2c" stroke-width="0.35"/><ellipse cx="17.91" cy="4.51" rx="2.9" ry="1.3" transform="rotate(237.2 17.91 4.51)" fill="#f7c673" stroke="#cf8a2c" stroke-width="0.35"/><ellipse cx="20.29" cy="3.64" rx="2.9" ry="1.3" transform="rotate(262.9 20.29 3.64)" fill="#f7c673" stroke="#cf8a2c" stroke-width="0.35"/><ellipse cx="22.82" cy="3.90" rx="2.9" ry="1.3" transform="rotate(288.6 22.82 3.90)" fill="#f7c673" stroke="#cf8a2c" stroke-width="0.35"/><ellipse cx="24.98" cy="5.22" rx="2.9" ry="1.3" transform="rotate(314.3 24.98 5.22)" fill="#f7c673" stroke="#cf8a2c" stroke-width="0.35"/><ellipse cx="26.36" cy="7.35" rx="2.9" ry="1.3" transform="rotate(340.0 26.36 7.35)" fill="#f7c673" stroke="#cf8a2c" stroke-width="0.35"/><circle cx="21.0" cy="9.3" r="3.7" fill="#a85c22"/><circle cx="20.7" cy="9.0" r="2.4" fill="#bf7834"/></g></svg>
<span class="t" style="left:234.50px;top:164.00px;font-size:11px;line-height:14px;letter-spacing:-1.042px;color:#000;">CUENTAS</span>
<span class="t" style="left:346.50px;top:164.00px;font-size:11px;line-height:14px;letter-spacing:-0.912px;color:#000;">RESTAURANTE</span>
<span class="t" style="left:485.00px;top:164.00px;font-size:11px;line-height:14px;letter-spacing:-1.062px;color:#000;">TERRAZA</span>
<div class="a" style="left:2px;top:120px;width:24px;height:81px;border:1px solid #d9d9d9;border-top:none;border-left:none;background:#f0f0f0;"></div>
<span class="t" style="left:21px;top:134.3px;font-size:11.6px;line-height:14px;letter-spacing:-0.5px;color:#14205a;transform-origin:0 0;transform:rotate(90deg);">Navegación</span>
<div class="tile" style="left:64px;top:229px"><svg class="i" style="left:7px;top:0px" width="40" height="34" viewBox="0 0 1130 960" ><defs><radialGradient id="gBunT" cx="0.5" cy="0.42" r="0.62"><stop offset="0" stop-color="#ffff9c"/><stop offset="0.35" stop-color="#ffd58a"/><stop offset="0.8" stop-color="#f7a860"/><stop offset="1" stop-color="#ee9448"/></radialGradient><linearGradient id="gBunB" x1="0" y1="0" x2="0" y2="1"><stop offset="0" stop-color="#f9b674"/><stop offset="0.6" stop-color="#f0a05a"/><stop offset="1" stop-color="#c87434"/></linearGradient><linearGradient id="gPat" x1="0" y1="0" x2="0" y2="1"><stop offset="0" stop-color="#d99a7a"/><stop offset="1" stop-color="#9a4a22"/></linearGradient></defs><path d="M165,720 Q170,860 420,866 L720,866 Q960,860 965,720Z" fill="url(#gBunB)"/><path d="M140,690 Q150,640 260,655 L900,650 Q985,640 992,690 Q960,740 900,730 Q880,770 820,745 Q790,785 730,750 Q690,790 640,752 Q600,790 540,750 Q500,790 440,752 Q400,790 350,750 Q300,800 262,752 Q200,770 140,690Z" fill="#3bbd22"/><path d="M150,680 Q300,700 560,668 Q800,690 985,672 L985,650 L150,650Z" fill="#2a9a1c" opacity="0.8"/><rect x="172" y="596" width="800" height="80" rx="36" fill="url(#gPat)"/><path d="M500,606 L700,606 L640,680 L610,640 L520,636Z" fill="#fff" opacity="0.75"/><path d="M790,630 L930,620 L940,650 L810,668Z" fill="#fff" opacity="0.7"/><rect x="200" y="610" width="280" height="22" fill="#e8c8b4" opacity="0.6"/><rect x="180" y="562" width="790" height="42" rx="20" fill="#ea2f18"/><path d="M118,520 Q160,498 260,508 L900,506 Q985,498 1008,520 Q960,560 880,556 Q820,590 760,560 Q700,590 640,562 Q560,596 480,562 Q400,592 320,560 Q220,586 118,520Z" fill="#2c9c1c"/><rect x="172" y="462" width="790" height="64" rx="28" fill="#f9a93a"/><rect x="190" y="436" width="750" height="40" rx="18" fill="#f4ead0"/><rect x="200" y="426" width="730" height="20" rx="10" fill="#2f7a3a"/><path d="M168,398 Q160,200 330,130 Q560,40 790,130 Q945,200 936,398 Q760,430 552,420 Q340,430 168,398Z" fill="url(#gBunT)"/><path d="M168,388 Q340,416 552,392 Q760,372 936,398 L930,430 Q880,440 830,432 L822,560 Q800,580 786,560 L780,432 L722,430 L712,530 Q690,548 672,530 L664,432 L462,434 L456,530 Q436,546 420,530 L414,436 Q300,450 172,420Z" fill="#b42a10"/><path d="M168,388 Q340,416 552,392 Q760,372 936,398 L934,412 Q760,392 552,410 Q340,432 170,404Z" fill="#8e1f0a" opacity="0.7"/></svg><div class="tl" style="top:37px">HAB_101</div></div>
<div class="tile" style="left:144px;top:229px"><svg class="i" style="left:-1px;top:-1px" width="57" height="36" viewBox="0 0 57 36" ><ellipse cx="37" cy="21.6" rx="7" ry="1.5" fill="#8c8c98" opacity="0.5"/><polygon points="28.2,3.2 31.9,13.0 42.7,15.1 34.7,21.3 36.2,33.6 26.4,25.9 17.8,31.4 19.9,21.3 13.8,13.3 23.3,12.1" fill="#f59a1a" stroke="#f59a1a" stroke-width="0.8" stroke-linejoin="round"/><polygon points="26.3,18.6 27.3,2.5 31.0,12.3" fill="url(#gStarO)" stroke="none" stroke-width="0.3"/><polygon points="26.3,18.6 31.0,12.3 41.8,14.4" fill="#ffdc00" stroke="#ffdc00" stroke-width="0.3"/><polygon points="26.3,18.6 41.8,14.4 33.8,20.6" fill="url(#gStarR)" stroke="none" stroke-width="0.3"/><polygon points="26.3,18.6 33.8,20.6 35.3,32.9" fill="#ffe200" stroke="#ffe200" stroke-width="0.3"/><polygon points="26.3,18.6 35.3,32.9 25.5,25.2" fill="#ffec00" stroke="#ffec00" stroke-width="0.3"/><polygon points="26.3,18.6 25.5,25.2 16.9,30.7" fill="#ffd000" stroke="#ffd000" stroke-width="0.3"/><polygon points="26.3,18.6 16.9,30.7 19.0,20.6" fill="#ffe000" stroke="#ffe000" stroke-width="0.3"/><polygon points="26.3,18.6 19.0,20.6 12.9,12.6" fill="#ffd400" stroke="#ffd400" stroke-width="0.3"/><polygon points="26.3,18.6 12.9,12.6 22.4,11.4" fill="#fff228" stroke="#fff228" stroke-width="0.3"/><polygon points="26.3,18.6 22.4,11.4 27.3,2.5" fill="#ffe000" stroke="#ffe000" stroke-width="0.3"/><path d="M27.9,4.0 L31.5,12.3" stroke="#f7831a" stroke-width="1.2" fill="none" opacity="0.8"/><path d="M34.1,20.6 L35.8,32.4" stroke="#f7831a" stroke-width="1.1" fill="none" opacity="0.7"/></svg><div class="tl" style="top:37px">HAB_102</div></div>
<div class="tile" style="left:224px;top:229px"><svg class="i" style="left:-1px;top:-1px" width="57" height="36" viewBox="0 0 57 36" ><ellipse cx="37" cy="21.6" rx="7" ry="1.5" fill="#8c8c98" opacity="0.5"/><polygon points="28.2,3.2 31.9,13.0 42.7,15.1 34.7,21.3 36.2,33.6 26.4,25.9 17.8,31.4 19.9,21.3 13.8,13.3 23.3,12.1" fill="#f59a1a" stroke="#f59a1a" stroke-width="0.8" stroke-linejoin="round"/><polygon points="26.3,18.6 27.3,2.5 31.0,12.3" fill="url(#gStarO)" stroke="none" stroke-width="0.3"/><polygon points="26.3,18.6 31.0,12.3 41.8,14.4" fill="#ffdc00" stroke="#ffdc00" stroke-width="0.3"/><polygon points="26.3,18.6 41.8,14.4 33.8,20.6" fill="url(#gStarR)" stroke="none" stroke-width="0.3"/><polygon points="26.3,18.6 33.8,20.6 35.3,32.9" fill="#ffe200" stroke="#ffe200" stroke-width="0.3"/><polygon points="26.3,18.6 35.3,32.9 25.5,25.2" fill="#ffec00" stroke="#ffec00" stroke-width="0.3"/><polygon points="26.3,18.6 25.5,25.2 16.9,30.7" fill="#ffd000" stroke="#ffd000" stroke-width="0.3"/><polygon points="26.3,18.6 16.9,30.7 19.0,20.6" fill="#ffe000" stroke="#ffe000" stroke-width="0.3"/><polygon points="26.3,18.6 19.0,20.6 12.9,12.6" fill="#ffd400" stroke="#ffd400" stroke-width="0.3"/><polygon points="26.3,18.6 12.9,12.6 22.4,11.4" fill="#fff228" stroke="#fff228" stroke-width="0.3"/><polygon points="26.3,18.6 22.4,11.4 27.3,2.5" fill="#ffe000" stroke="#ffe000" stroke-width="0.3"/><path d="M27.9,4.0 L31.5,12.3" stroke="#f7831a" stroke-width="1.2" fill="none" opacity="0.8"/><path d="M34.1,20.6 L35.8,32.4" stroke="#f7831a" stroke-width="1.1" fill="none" opacity="0.7"/></svg><div class="tl" style="top:37px">HAB_103</div></div>
<div class="tile" style="left:304px;top:229px"><svg class="i" style="left:-1px;top:-1px" width="57" height="36" viewBox="0 0 57 36" ><ellipse cx="37" cy="21.6" rx="7" ry="1.5" fill="#8c8c98" opacity="0.5"/><polygon points="28.2,3.2 31.9,13.0 42.7,15.1 34.7,21.3 36.2,33.6 26.4,25.9 17.8,31.4 19.9,21.3 13.8,13.3 23.3,12.1" fill="#f59a1a" stroke="#f59a1a" stroke-width="0.8" stroke-linejoin="round"/><polygon points="26.3,18.6 27.3,2.5 31.0,12.3" fill="url(#gStarO)" stroke="none" stroke-width="0.3"/><polygon points="26.3,18.6 31.0,12.3 41.8,14.4" fill="#ffdc00" stroke="#ffdc00" stroke-width="0.3"/><polygon points="26.3,18.6 41.8,14.4 33.8,20.6" fill="url(#gStarR)" stroke="none" stroke-width="0.3"/><polygon points="26.3,18.6 33.8,20.6 35.3,32.9" fill="#ffe200" stroke="#ffe200" stroke-width="0.3"/><polygon points="26.3,18.6 35.3,32.9 25.5,25.2" fill="#ffec00" stroke="#ffec00" stroke-width="0.3"/><polygon points="26.3,18.6 25.5,25.2 16.9,30.7" fill="#ffd000" stroke="#ffd000" stroke-width="0.3"/><polygon points="26.3,18.6 16.9,30.7 19.0,20.6" fill="#ffe000" stroke="#ffe000" stroke-width="0.3"/><polygon points="26.3,18.6 19.0,20.6 12.9,12.6" fill="#ffd400" stroke="#ffd400" stroke-width="0.3"/><polygon points="26.3,18.6 12.9,12.6 22.4,11.4" fill="#fff228" stroke="#fff228" stroke-width="0.3"/><polygon points="26.3,18.6 22.4,11.4 27.3,2.5" fill="#ffe000" stroke="#ffe000" stroke-width="0.3"/><path d="M27.9,4.0 L31.5,12.3" stroke="#f7831a" stroke-width="1.2" fill="none" opacity="0.8"/><path d="M34.1,20.6 L35.8,32.4" stroke="#f7831a" stroke-width="1.1" fill="none" opacity="0.7"/></svg><div class="tl" style="top:37px">HAB_104</div></div>
<div class="tile" style="left:384px;top:229px"><svg class="i" style="left:-1px;top:-1px" width="57" height="36" viewBox="0 0 57 36" ><ellipse cx="37" cy="21.6" rx="7" ry="1.5" fill="#8c8c98" opacity="0.5"/><polygon points="28.2,3.2 31.9,13.0 42.7,15.1 34.7,21.3 36.2,33.6 26.4,25.9 17.8,31.4 19.9,21.3 13.8,13.3 23.3,12.1" fill="#f59a1a" stroke="#f59a1a" stroke-width="0.8" stroke-linejoin="round"/><polygon points="26.3,18.6 27.3,2.5 31.0,12.3" fill="url(#gStarO)" stroke="none" stroke-width="0.3"/><polygon points="26.3,18.6 31.0,12.3 41.8,14.4" fill="#ffdc00" stroke="#ffdc00" stroke-width="0.3"/><polygon points="26.3,18.6 41.8,14.4 33.8,20.6" fill="url(#gStarR)" stroke="none" stroke-width="0.3"/><polygon points="26.3,18.6 33.8,20.6 35.3,32.9" fill="#ffe200" stroke="#ffe200" stroke-width="0.3"/><polygon points="26.3,18.6 35.3,32.9 25.5,25.2" fill="#ffec00" stroke="#ffec00" stroke-width="0.3"/><polygon points="26.3,18.6 25.5,25.2 16.9,30.7" fill="#ffd000" stroke="#ffd000" stroke-width="0.3"/><polygon points="26.3,18.6 16.9,30.7 19.0,20.6" fill="#ffe000" stroke="#ffe000" stroke-width="0.3"/><polygon points="26.3,18.6 19.0,20.6 12.9,12.6" fill="#ffd400" stroke="#ffd400" stroke-width="0.3"/><polygon points="26.3,18.6 12.9,12.6 22.4,11.4" fill="#fff228" stroke="#fff228" stroke-width="0.3"/><polygon points="26.3,18.6 22.4,11.4 27.3,2.5" fill="#ffe000" stroke="#ffe000" stroke-width="0.3"/><path d="M27.9,4.0 L31.5,12.3" stroke="#f7831a" stroke-width="1.2" fill="none" opacity="0.8"/><path d="M34.1,20.6 L35.8,32.4" stroke="#f7831a" stroke-width="1.1" fill="none" opacity="0.7"/></svg><div class="tl" style="top:37px">HAB_105</div></div>
<div class="tile" style="left:464px;top:229px"><svg class="i" style="left:-1px;top:-1px" width="57" height="36" viewBox="0 0 57 36" ><ellipse cx="37" cy="21.6" rx="7" ry="1.5" fill="#8c8c98" opacity="0.5"/><polygon points="28.2,3.2 31.9,13.0 42.7,15.1 34.7,21.3 36.2,33.6 26.4,25.9 17.8,31.4 19.9,21.3 13.8,13.3 23.3,12.1" fill="#f59a1a" stroke="#f59a1a" stroke-width="0.8" stroke-linejoin="round"/><polygon points="26.3,18.6 27.3,2.5 31.0,12.3" fill="url(#gStarO)" stroke="none" stroke-width="0.3"/><polygon points="26.3,18.6 31.0,12.3 41.8,14.4" fill="#ffdc00" stroke="#ffdc00" stroke-width="0.3"/><polygon points="26.3,18.6 41.8,14.4 33.8,20.6" fill="url(#gStarR)" stroke="none" stroke-width="0.3"/><polygon points="26.3,18.6 33.8,20.6 35.3,32.9" fill="#ffe200" stroke="#ffe200" stroke-width="0.3"/><polygon points="26.3,18.6 35.3,32.9 25.5,25.2" fill="#ffec00" stroke="#ffec00" stroke-width="0.3"/><polygon points="26.3,18.6 25.5,25.2 16.9,30.7" fill="#ffd000" stroke="#ffd000" stroke-width="0.3"/><polygon points="26.3,18.6 16.9,30.7 19.0,20.6" fill="#ffe000" stroke="#ffe000" stroke-width="0.3"/><polygon points="26.3,18.6 19.0,20.6 12.9,12.6" fill="#ffd400" stroke="#ffd400" stroke-width="0.3"/><polygon points="26.3,18.6 12.9,12.6 22.4,11.4" fill="#fff228" stroke="#fff228" stroke-width="0.3"/><polygon points="26.3,18.6 22.4,11.4 27.3,2.5" fill="#ffe000" stroke="#ffe000" stroke-width="0.3"/><path d="M27.9,4.0 L31.5,12.3" stroke="#f7831a" stroke-width="1.2" fill="none" opacity="0.8"/><path d="M34.1,20.6 L35.8,32.4" stroke="#f7831a" stroke-width="1.1" fill="none" opacity="0.7"/></svg><div class="tl" style="top:37px">HAB_201</div></div>
<div class="tile" style="left:544px;top:229px"><svg class="i" style="left:-1px;top:-1px" width="57" height="36" viewBox="0 0 57 36" ><ellipse cx="37" cy="21.6" rx="7" ry="1.5" fill="#8c8c98" opacity="0.5"/><polygon points="28.2,3.2 31.9,13.0 42.7,15.1 34.7,21.3 36.2,33.6 26.4,25.9 17.8,31.4 19.9,21.3 13.8,13.3 23.3,12.1" fill="#f59a1a" stroke="#f59a1a" stroke-width="0.8" stroke-linejoin="round"/><polygon points="26.3,18.6 27.3,2.5 31.0,12.3" fill="url(#gStarO)" stroke="none" stroke-width="0.3"/><polygon points="26.3,18.6 31.0,12.3 41.8,14.4" fill="#ffdc00" stroke="#ffdc00" stroke-width="0.3"/><polygon points="26.3,18.6 41.8,14.4 33.8,20.6" fill="url(#gStarR)" stroke="none" stroke-width="0.3"/><polygon points="26.3,18.6 33.8,20.6 35.3,32.9" fill="#ffe200" stroke="#ffe200" stroke-width="0.3"/><polygon points="26.3,18.6 35.3,32.9 25.5,25.2" fill="#ffec00" stroke="#ffec00" stroke-width="0.3"/><polygon points="26.3,18.6 25.5,25.2 16.9,30.7" fill="#ffd000" stroke="#ffd000" stroke-width="0.3"/><polygon points="26.3,18.6 16.9,30.7 19.0,20.6" fill="#ffe000" stroke="#ffe000" stroke-width="0.3"/><polygon points="26.3,18.6 19.0,20.6 12.9,12.6" fill="#ffd400" stroke="#ffd400" stroke-width="0.3"/><polygon points="26.3,18.6 12.9,12.6 22.4,11.4" fill="#fff228" stroke="#fff228" stroke-width="0.3"/><polygon points="26.3,18.6 22.4,11.4 27.3,2.5" fill="#ffe000" stroke="#ffe000" stroke-width="0.3"/><path d="M27.9,4.0 L31.5,12.3" stroke="#f7831a" stroke-width="1.2" fill="none" opacity="0.8"/><path d="M34.1,20.6 L35.8,32.4" stroke="#f7831a" stroke-width="1.1" fill="none" opacity="0.7"/></svg><div class="tl" style="top:37px">HAB_202</div></div>
<div class="tile" style="left:624px;top:229px"><svg class="i" style="left:-1px;top:-1px" width="57" height="36" viewBox="0 0 57 36" ><ellipse cx="37" cy="21.6" rx="7" ry="1.5" fill="#8c8c98" opacity="0.5"/><polygon points="28.2,3.2 31.9,13.0 42.7,15.1 34.7,21.3 36.2,33.6 26.4,25.9 17.8,31.4 19.9,21.3 13.8,13.3 23.3,12.1" fill="#f59a1a" stroke="#f59a1a" stroke-width="0.8" stroke-linejoin="round"/><polygon points="26.3,18.6 27.3,2.5 31.0,12.3" fill="url(#gStarO)" stroke="none" stroke-width="0.3"/><polygon points="26.3,18.6 31.0,12.3 41.8,14.4" fill="#ffdc00" stroke="#ffdc00" stroke-width="0.3"/><polygon points="26.3,18.6 41.8,14.4 33.8,20.6" fill="url(#gStarR)" stroke="none" stroke-width="0.3"/><polygon points="26.3,18.6 33.8,20.6 35.3,32.9" fill="#ffe200" stroke="#ffe200" stroke-width="0.3"/><polygon points="26.3,18.6 35.3,32.9 25.5,25.2" fill="#ffec00" stroke="#ffec00" stroke-width="0.3"/><polygon points="26.3,18.6 25.5,25.2 16.9,30.7" fill="#ffd000" stroke="#ffd000" stroke-width="0.3"/><polygon points="26.3,18.6 16.9,30.7 19.0,20.6" fill="#ffe000" stroke="#ffe000" stroke-width="0.3"/><polygon points="26.3,18.6 19.0,20.6 12.9,12.6" fill="#ffd400" stroke="#ffd400" stroke-width="0.3"/><polygon points="26.3,18.6 12.9,12.6 22.4,11.4" fill="#fff228" stroke="#fff228" stroke-width="0.3"/><polygon points="26.3,18.6 22.4,11.4 27.3,2.5" fill="#ffe000" stroke="#ffe000" stroke-width="0.3"/><path d="M27.9,4.0 L31.5,12.3" stroke="#f7831a" stroke-width="1.2" fill="none" opacity="0.8"/><path d="M34.1,20.6 L35.8,32.4" stroke="#f7831a" stroke-width="1.1" fill="none" opacity="0.7"/></svg><div class="tl" style="top:37px">HAB_203</div></div>
<div class="tile" style="left:704px;top:229px"><svg class="i" style="left:-1px;top:-1px" width="57" height="36" viewBox="0 0 57 36" ><ellipse cx="37" cy="21.6" rx="7" ry="1.5" fill="#8c8c98" opacity="0.5"/><polygon points="28.2,3.2 31.9,13.0 42.7,15.1 34.7,21.3 36.2,33.6 26.4,25.9 17.8,31.4 19.9,21.3 13.8,13.3 23.3,12.1" fill="#f59a1a" stroke="#f59a1a" stroke-width="0.8" stroke-linejoin="round"/><polygon points="26.3,18.6 27.3,2.5 31.0,12.3" fill="url(#gStarO)" stroke="none" stroke-width="0.3"/><polygon points="26.3,18.6 31.0,12.3 41.8,14.4" fill="#ffdc00" stroke="#ffdc00" stroke-width="0.3"/><polygon points="26.3,18.6 41.8,14.4 33.8,20.6" fill="url(#gStarR)" stroke="none" stroke-width="0.3"/><polygon points="26.3,18.6 33.8,20.6 35.3,32.9" fill="#ffe200" stroke="#ffe200" stroke-width="0.3"/><polygon points="26.3,18.6 35.3,32.9 25.5,25.2" fill="#ffec00" stroke="#ffec00" stroke-width="0.3"/><polygon points="26.3,18.6 25.5,25.2 16.9,30.7" fill="#ffd000" stroke="#ffd000" stroke-width="0.3"/><polygon points="26.3,18.6 16.9,30.7 19.0,20.6" fill="#ffe000" stroke="#ffe000" stroke-width="0.3"/><polygon points="26.3,18.6 19.0,20.6 12.9,12.6" fill="#ffd400" stroke="#ffd400" stroke-width="0.3"/><polygon points="26.3,18.6 12.9,12.6 22.4,11.4" fill="#fff228" stroke="#fff228" stroke-width="0.3"/><polygon points="26.3,18.6 22.4,11.4 27.3,2.5" fill="#ffe000" stroke="#ffe000" stroke-width="0.3"/><path d="M27.9,4.0 L31.5,12.3" stroke="#f7831a" stroke-width="1.2" fill="none" opacity="0.8"/><path d="M34.1,20.6 L35.8,32.4" stroke="#f7831a" stroke-width="1.1" fill="none" opacity="0.7"/></svg><div class="tl" style="top:37px">HAB_204</div></div>
<div class="tile" style="left:784px;top:229px"><svg class="i" style="left:-1px;top:-1px" width="57" height="36" viewBox="0 0 57 36" ><ellipse cx="37" cy="21.6" rx="7" ry="1.5" fill="#8c8c98" opacity="0.5"/><polygon points="28.2,3.2 31.9,13.0 42.7,15.1 34.7,21.3 36.2,33.6 26.4,25.9 17.8,31.4 19.9,21.3 13.8,13.3 23.3,12.1" fill="#f59a1a" stroke="#f59a1a" stroke-width="0.8" stroke-linejoin="round"/><polygon points="26.3,18.6 27.3,2.5 31.0,12.3" fill="url(#gStarO)" stroke="none" stroke-width="0.3"/><polygon points="26.3,18.6 31.0,12.3 41.8,14.4" fill="#ffdc00" stroke="#ffdc00" stroke-width="0.3"/><polygon points="26.3,18.6 41.8,14.4 33.8,20.6" fill="url(#gStarR)" stroke="none" stroke-width="0.3"/><polygon points="26.3,18.6 33.8,20.6 35.3,32.9" fill="#ffe200" stroke="#ffe200" stroke-width="0.3"/><polygon points="26.3,18.6 35.3,32.9 25.5,25.2" fill="#ffec00" stroke="#ffec00" stroke-width="0.3"/><polygon points="26.3,18.6 25.5,25.2 16.9,30.7" fill="#ffd000" stroke="#ffd000" stroke-width="0.3"/><polygon points="26.3,18.6 16.9,30.7 19.0,20.6" fill="#ffe000" stroke="#ffe000" stroke-width="0.3"/><polygon points="26.3,18.6 19.0,20.6 12.9,12.6" fill="#ffd400" stroke="#ffd400" stroke-width="0.3"/><polygon points="26.3,18.6 12.9,12.6 22.4,11.4" fill="#fff228" stroke="#fff228" stroke-width="0.3"/><polygon points="26.3,18.6 22.4,11.4 27.3,2.5" fill="#ffe000" stroke="#ffe000" stroke-width="0.3"/><path d="M27.9,4.0 L31.5,12.3" stroke="#f7831a" stroke-width="1.2" fill="none" opacity="0.8"/><path d="M34.1,20.6 L35.8,32.4" stroke="#f7831a" stroke-width="1.1" fill="none" opacity="0.7"/></svg><div class="tl" style="top:37px">HAB_205</div></div>
<div class="tile" style="left:864px;top:229px"><svg class="i" style="left:-1px;top:-1px" width="57" height="36" viewBox="0 0 57 36" ><ellipse cx="37" cy="21.6" rx="7" ry="1.5" fill="#8c8c98" opacity="0.5"/><polygon points="28.2,3.2 31.9,13.0 42.7,15.1 34.7,21.3 36.2,33.6 26.4,25.9 17.8,31.4 19.9,21.3 13.8,13.3 23.3,12.1" fill="#f59a1a" stroke="#f59a1a" stroke-width="0.8" stroke-linejoin="round"/><polygon points="26.3,18.6 27.3,2.5 31.0,12.3" fill="url(#gStarO)" stroke="none" stroke-width="0.3"/><polygon points="26.3,18.6 31.0,12.3 41.8,14.4" fill="#ffdc00" stroke="#ffdc00" stroke-width="0.3"/><polygon points="26.3,18.6 41.8,14.4 33.8,20.6" fill="url(#gStarR)" stroke="none" stroke-width="0.3"/><polygon points="26.3,18.6 33.8,20.6 35.3,32.9" fill="#ffe200" stroke="#ffe200" stroke-width="0.3"/><polygon points="26.3,18.6 35.3,32.9 25.5,25.2" fill="#ffec00" stroke="#ffec00" stroke-width="0.3"/><polygon points="26.3,18.6 25.5,25.2 16.9,30.7" fill="#ffd000" stroke="#ffd000" stroke-width="0.3"/><polygon points="26.3,18.6 16.9,30.7 19.0,20.6" fill="#ffe000" stroke="#ffe000" stroke-width="0.3"/><polygon points="26.3,18.6 19.0,20.6 12.9,12.6" fill="#ffd400" stroke="#ffd400" stroke-width="0.3"/><polygon points="26.3,18.6 12.9,12.6 22.4,11.4" fill="#fff228" stroke="#fff228" stroke-width="0.3"/><polygon points="26.3,18.6 22.4,11.4 27.3,2.5" fill="#ffe000" stroke="#ffe000" stroke-width="0.3"/><path d="M27.9,4.0 L31.5,12.3" stroke="#f7831a" stroke-width="1.2" fill="none" opacity="0.8"/><path d="M34.1,20.6 L35.8,32.4" stroke="#f7831a" stroke-width="1.1" fill="none" opacity="0.7"/></svg><div class="tl" style="top:37px">HAB_206</div></div>
<div class="tile" style="left:64px;top:319px"><svg class="i" style="left:7px;top:0px" width="40" height="34" viewBox="0 0 1130 960" ><defs><radialGradient id="gBunT" cx="0.5" cy="0.42" r="0.62"><stop offset="0" stop-color="#ffff9c"/><stop offset="0.35" stop-color="#ffd58a"/><stop offset="0.8" stop-color="#f7a860"/><stop offset="1" stop-color="#ee9448"/></radialGradient><linearGradient id="gBunB" x1="0" y1="0" x2="0" y2="1"><stop offset="0" stop-color="#f9b674"/><stop offset="0.6" stop-color="#f0a05a"/><stop offset="1" stop-color="#c87434"/></linearGradient><linearGradient id="gPat" x1="0" y1="0" x2="0" y2="1"><stop offset="0" stop-color="#d99a7a"/><stop offset="1" stop-color="#9a4a22"/></linearGradient></defs><path d="M165,720 Q170,860 420,866 L720,866 Q960,860 965,720Z" fill="url(#gBunB)"/><path d="M140,690 Q150,640 260,655 L900,650 Q985,640 992,690 Q960,740 900,730 Q880,770 820,745 Q790,785 730,750 Q690,790 640,752 Q600,790 540,750 Q500,790 440,752 Q400,790 350,750 Q300,800 262,752 Q200,770 140,690Z" fill="#3bbd22"/><path d="M150,680 Q300,700 560,668 Q800,690 985,672 L985,650 L150,650Z" fill="#2a9a1c" opacity="0.8"/><rect x="172" y="596" width="800" height="80" rx="36" fill="url(#gPat)"/><path d="M500,606 L700,606 L640,680 L610,640 L520,636Z" fill="#fff" opacity="0.75"/><path d="M790,630 L930,620 L940,650 L810,668Z" fill="#fff" opacity="0.7"/><rect x="200" y="610" width="280" height="22" fill="#e8c8b4" opacity="0.6"/><rect x="180" y="562" width="790" height="42" rx="20" fill="#ea2f18"/><path d="M118,520 Q160,498 260,508 L900,506 Q985,498 1008,520 Q960,560 880,556 Q820,590 760,560 Q700,590 640,562 Q560,596 480,562 Q400,592 320,560 Q220,586 118,520Z" fill="#2c9c1c"/><rect x="172" y="462" width="790" height="64" rx="28" fill="#f9a93a"/><rect x="190" y="436" width="750" height="40" rx="18" fill="#f4ead0"/><rect x="200" y="426" width="730" height="20" rx="10" fill="#2f7a3a"/><path d="M168,398 Q160,200 330,130 Q560,40 790,130 Q945,200 936,398 Q760,430 552,420 Q340,430 168,398Z" fill="url(#gBunT)"/><path d="M168,388 Q340,416 552,392 Q760,372 936,398 L930,430 Q880,440 830,432 L822,560 Q800,580 786,560 L780,432 L722,430 L712,530 Q690,548 672,530 L664,432 L462,434 L456,530 Q436,546 420,530 L414,436 Q300,450 172,420Z" fill="#b42a10"/><path d="M168,388 Q340,416 552,392 Q760,372 936,398 L934,412 Q760,392 552,410 Q340,432 170,404Z" fill="#8e1f0a" opacity="0.7"/></svg><div class="tl" style="top:37px">HAB_01</div></div>
<div class="tile" style="left:144px;top:319px"><svg class="i" style="left:-1px;top:-1px" width="57" height="36" viewBox="0 0 57 36" ><ellipse cx="37" cy="21.6" rx="7" ry="1.5" fill="#8c8c98" opacity="0.5"/><polygon points="28.2,3.2 31.9,13.0 42.7,15.1 34.7,21.3 36.2,33.6 26.4,25.9 17.8,31.4 19.9,21.3 13.8,13.3 23.3,12.1" fill="#f59a1a" stroke="#f59a1a" stroke-width="0.8" stroke-linejoin="round"/><polygon points="26.3,18.6 27.3,2.5 31.0,12.3" fill="url(#gStarO)" stroke="none" stroke-width="0.3"/><polygon points="26.3,18.6 31.0,12.3 41.8,14.4" fill="#ffdc00" stroke="#ffdc00" stroke-width="0.3"/><polygon points="26.3,18.6 41.8,14.4 33.8,20.6" fill="url(#gStarR)" stroke="none" stroke-width="0.3"/><polygon points="26.3,18.6 33.8,20.6 35.3,32.9" fill="#ffe200" stroke="#ffe200" stroke-width="0.3"/><polygon points="26.3,18.6 35.3,32.9 25.5,25.2" fill="#ffec00" stroke="#ffec00" stroke-width="0.3"/><polygon points="26.3,18.6 25.5,25.2 16.9,30.7" fill="#ffd000" stroke="#ffd000" stroke-width="0.3"/><polygon points="26.3,18.6 16.9,30.7 19.0,20.6" fill="#ffe000" stroke="#ffe000" stroke-width="0.3"/><polygon points="26.3,18.6 19.0,20.6 12.9,12.6" fill="#ffd400" stroke="#ffd400" stroke-width="0.3"/><polygon points="26.3,18.6 12.9,12.6 22.4,11.4" fill="#fff228" stroke="#fff228" stroke-width="0.3"/><polygon points="26.3,18.6 22.4,11.4 27.3,2.5" fill="#ffe000" stroke="#ffe000" stroke-width="0.3"/><path d="M27.9,4.0 L31.5,12.3" stroke="#f7831a" stroke-width="1.2" fill="none" opacity="0.8"/><path d="M34.1,20.6 L35.8,32.4" stroke="#f7831a" stroke-width="1.1" fill="none" opacity="0.7"/></svg><div class="tl" style="top:37px">HAB_02</div></div>
<div class="tile" style="left:224px;top:319px"><svg class="i" style="left:-1px;top:-1px" width="57" height="36" viewBox="0 0 57 36" ><ellipse cx="37" cy="21.6" rx="7" ry="1.5" fill="#8c8c98" opacity="0.5"/><polygon points="28.2,3.2 31.9,13.0 42.7,15.1 34.7,21.3 36.2,33.6 26.4,25.9 17.8,31.4 19.9,21.3 13.8,13.3 23.3,12.1" fill="#f59a1a" stroke="#f59a1a" stroke-width="0.8" stroke-linejoin="round"/><polygon points="26.3,18.6 27.3,2.5 31.0,12.3" fill="url(#gStarO)" stroke="none" stroke-width="0.3"/><polygon points="26.3,18.6 31.0,12.3 41.8,14.4" fill="#ffdc00" stroke="#ffdc00" stroke-width="0.3"/><polygon points="26.3,18.6 41.8,14.4 33.8,20.6" fill="url(#gStarR)" stroke="none" stroke-width="0.3"/><polygon points="26.3,18.6 33.8,20.6 35.3,32.9" fill="#ffe200" stroke="#ffe200" stroke-width="0.3"/><polygon points="26.3,18.6 35.3,32.9 25.5,25.2" fill="#ffec00" stroke="#ffec00" stroke-width="0.3"/><polygon points="26.3,18.6 25.5,25.2 16.9,30.7" fill="#ffd000" stroke="#ffd000" stroke-width="0.3"/><polygon points="26.3,18.6 16.9,30.7 19.0,20.6" fill="#ffe000" stroke="#ffe000" stroke-width="0.3"/><polygon points="26.3,18.6 19.0,20.6 12.9,12.6" fill="#ffd400" stroke="#ffd400" stroke-width="0.3"/><polygon points="26.3,18.6 12.9,12.6 22.4,11.4" fill="#fff228" stroke="#fff228" stroke-width="0.3"/><polygon points="26.3,18.6 22.4,11.4 27.3,2.5" fill="#ffe000" stroke="#ffe000" stroke-width="0.3"/><path d="M27.9,4.0 L31.5,12.3" stroke="#f7831a" stroke-width="1.2" fill="none" opacity="0.8"/><path d="M34.1,20.6 L35.8,32.4" stroke="#f7831a" stroke-width="1.1" fill="none" opacity="0.7"/></svg><div class="tl" style="top:37px">HAB_03</div></div>
<div class="tile" style="left:304px;top:319px"><svg class="i" style="left:-1px;top:-1px" width="57" height="36" viewBox="0 0 57 36" ><ellipse cx="37" cy="21.6" rx="7" ry="1.5" fill="#8c8c98" opacity="0.5"/><polygon points="28.2,3.2 31.9,13.0 42.7,15.1 34.7,21.3 36.2,33.6 26.4,25.9 17.8,31.4 19.9,21.3 13.8,13.3 23.3,12.1" fill="#f59a1a" stroke="#f59a1a" stroke-width="0.8" stroke-linejoin="round"/><polygon points="26.3,18.6 27.3,2.5 31.0,12.3" fill="url(#gStarO)" stroke="none" stroke-width="0.3"/><polygon points="26.3,18.6 31.0,12.3 41.8,14.4" fill="#ffdc00" stroke="#ffdc00" stroke-width="0.3"/><polygon points="26.3,18.6 41.8,14.4 33.8,20.6" fill="url(#gStarR)" stroke="none" stroke-width="0.3"/><polygon points="26.3,18.6 33.8,20.6 35.3,32.9" fill="#ffe200" stroke="#ffe200" stroke-width="0.3"/><polygon points="26.3,18.6 35.3,32.9 25.5,25.2" fill="#ffec00" stroke="#ffec00" stroke-width="0.3"/><polygon points="26.3,18.6 25.5,25.2 16.9,30.7" fill="#ffd000" stroke="#ffd000" stroke-width="0.3"/><polygon points="26.3,18.6 16.9,30.7 19.0,20.6" fill="#ffe000" stroke="#ffe000" stroke-width="0.3"/><polygon points="26.3,18.6 19.0,20.6 12.9,12.6" fill="#ffd400" stroke="#ffd400" stroke-width="0.3"/><polygon points="26.3,18.6 12.9,12.6 22.4,11.4" fill="#fff228" stroke="#fff228" stroke-width="0.3"/><polygon points="26.3,18.6 22.4,11.4 27.3,2.5" fill="#ffe000" stroke="#ffe000" stroke-width="0.3"/><path d="M27.9,4.0 L31.5,12.3" stroke="#f7831a" stroke-width="1.2" fill="none" opacity="0.8"/><path d="M34.1,20.6 L35.8,32.4" stroke="#f7831a" stroke-width="1.1" fill="none" opacity="0.7"/></svg><div class="tl" style="top:37px">HAB_04</div></div>
<div class="tile" style="left:384px;top:319px"><svg class="i" style="left:-1px;top:-1px" width="57" height="36" viewBox="0 0 57 36" ><ellipse cx="37" cy="21.6" rx="7" ry="1.5" fill="#8c8c98" opacity="0.5"/><polygon points="28.2,3.2 31.9,13.0 42.7,15.1 34.7,21.3 36.2,33.6 26.4,25.9 17.8,31.4 19.9,21.3 13.8,13.3 23.3,12.1" fill="#f59a1a" stroke="#f59a1a" stroke-width="0.8" stroke-linejoin="round"/><polygon points="26.3,18.6 27.3,2.5 31.0,12.3" fill="url(#gStarO)" stroke="none" stroke-width="0.3"/><polygon points="26.3,18.6 31.0,12.3 41.8,14.4" fill="#ffdc00" stroke="#ffdc00" stroke-width="0.3"/><polygon points="26.3,18.6 41.8,14.4 33.8,20.6" fill="url(#gStarR)" stroke="none" stroke-width="0.3"/><polygon points="26.3,18.6 33.8,20.6 35.3,32.9" fill="#ffe200" stroke="#ffe200" stroke-width="0.3"/><polygon points="26.3,18.6 35.3,32.9 25.5,25.2" fill="#ffec00" stroke="#ffec00" stroke-width="0.3"/><polygon points="26.3,18.6 25.5,25.2 16.9,30.7" fill="#ffd000" stroke="#ffd000" stroke-width="0.3"/><polygon points="26.3,18.6 16.9,30.7 19.0,20.6" fill="#ffe000" stroke="#ffe000" stroke-width="0.3"/><polygon points="26.3,18.6 19.0,20.6 12.9,12.6" fill="#ffd400" stroke="#ffd400" stroke-width="0.3"/><polygon points="26.3,18.6 12.9,12.6 22.4,11.4" fill="#fff228" stroke="#fff228" stroke-width="0.3"/><polygon points="26.3,18.6 22.4,11.4 27.3,2.5" fill="#ffe000" stroke="#ffe000" stroke-width="0.3"/><path d="M27.9,4.0 L31.5,12.3" stroke="#f7831a" stroke-width="1.2" fill="none" opacity="0.8"/><path d="M34.1,20.6 L35.8,32.4" stroke="#f7831a" stroke-width="1.1" fill="none" opacity="0.7"/></svg><div class="tl" style="top:37px">HAB_05</div></div>
<div class="tile" style="left:464px;top:319px"><svg class="i" style="left:-1px;top:-1px" width="57" height="36" viewBox="0 0 57 36" ><ellipse cx="37" cy="21.6" rx="7" ry="1.5" fill="#8c8c98" opacity="0.5"/><polygon points="28.2,3.2 31.9,13.0 42.7,15.1 34.7,21.3 36.2,33.6 26.4,25.9 17.8,31.4 19.9,21.3 13.8,13.3 23.3,12.1" fill="#f59a1a" stroke="#f59a1a" stroke-width="0.8" stroke-linejoin="round"/><polygon points="26.3,18.6 27.3,2.5 31.0,12.3" fill="url(#gStarO)" stroke="none" stroke-width="0.3"/><polygon points="26.3,18.6 31.0,12.3 41.8,14.4" fill="#ffdc00" stroke="#ffdc00" stroke-width="0.3"/><polygon points="26.3,18.6 41.8,14.4 33.8,20.6" fill="url(#gStarR)" stroke="none" stroke-width="0.3"/><polygon points="26.3,18.6 33.8,20.6 35.3,32.9" fill="#ffe200" stroke="#ffe200" stroke-width="0.3"/><polygon points="26.3,18.6 35.3,32.9 25.5,25.2" fill="#ffec00" stroke="#ffec00" stroke-width="0.3"/><polygon points="26.3,18.6 25.5,25.2 16.9,30.7" fill="#ffd000" stroke="#ffd000" stroke-width="0.3"/><polygon points="26.3,18.6 16.9,30.7 19.0,20.6" fill="#ffe000" stroke="#ffe000" stroke-width="0.3"/><polygon points="26.3,18.6 19.0,20.6 12.9,12.6" fill="#ffd400" stroke="#ffd400" stroke-width="0.3"/><polygon points="26.3,18.6 12.9,12.6 22.4,11.4" fill="#fff228" stroke="#fff228" stroke-width="0.3"/><polygon points="26.3,18.6 22.4,11.4 27.3,2.5" fill="#ffe000" stroke="#ffe000" stroke-width="0.3"/><path d="M27.9,4.0 L31.5,12.3" stroke="#f7831a" stroke-width="1.2" fill="none" opacity="0.8"/><path d="M34.1,20.6 L35.8,32.4" stroke="#f7831a" stroke-width="1.1" fill="none" opacity="0.7"/></svg><div class="tl" style="top:37px">CAB_1A</div></div>
<div class="tile" style="left:544px;top:319px"><svg class="i" style="left:-1px;top:-1px" width="57" height="36" viewBox="0 0 57 36" ><ellipse cx="37" cy="21.6" rx="7" ry="1.5" fill="#8c8c98" opacity="0.5"/><polygon points="28.2,3.2 31.9,13.0 42.7,15.1 34.7,21.3 36.2,33.6 26.4,25.9 17.8,31.4 19.9,21.3 13.8,13.3 23.3,12.1" fill="#f59a1a" stroke="#f59a1a" stroke-width="0.8" stroke-linejoin="round"/><polygon points="26.3,18.6 27.3,2.5 31.0,12.3" fill="url(#gStarO)" stroke="none" stroke-width="0.3"/><polygon points="26.3,18.6 31.0,12.3 41.8,14.4" fill="#ffdc00" stroke="#ffdc00" stroke-width="0.3"/><polygon points="26.3,18.6 41.8,14.4 33.8,20.6" fill="url(#gStarR)" stroke="none" stroke-width="0.3"/><polygon points="26.3,18.6 33.8,20.6 35.3,32.9" fill="#ffe200" stroke="#ffe200" stroke-width="0.3"/><polygon points="26.3,18.6 35.3,32.9 25.5,25.2" fill="#ffec00" stroke="#ffec00" stroke-width="0.3"/><polygon points="26.3,18.6 25.5,25.2 16.9,30.7" fill="#ffd000" stroke="#ffd000" stroke-width="0.3"/><polygon points="26.3,18.6 16.9,30.7 19.0,20.6" fill="#ffe000" stroke="#ffe000" stroke-width="0.3"/><polygon points="26.3,18.6 19.0,20.6 12.9,12.6" fill="#ffd400" stroke="#ffd400" stroke-width="0.3"/><polygon points="26.3,18.6 12.9,12.6 22.4,11.4" fill="#fff228" stroke="#fff228" stroke-width="0.3"/><polygon points="26.3,18.6 22.4,11.4 27.3,2.5" fill="#ffe000" stroke="#ffe000" stroke-width="0.3"/><path d="M27.9,4.0 L31.5,12.3" stroke="#f7831a" stroke-width="1.2" fill="none" opacity="0.8"/><path d="M34.1,20.6 L35.8,32.4" stroke="#f7831a" stroke-width="1.1" fill="none" opacity="0.7"/></svg><div class="tl" style="top:37px">CAB_1B</div></div>
<div class="tile" style="left:624px;top:319px"><svg class="i" style="left:-1px;top:-1px" width="57" height="36" viewBox="0 0 57 36" ><ellipse cx="37" cy="21.6" rx="7" ry="1.5" fill="#8c8c98" opacity="0.5"/><polygon points="28.2,3.2 31.9,13.0 42.7,15.1 34.7,21.3 36.2,33.6 26.4,25.9 17.8,31.4 19.9,21.3 13.8,13.3 23.3,12.1" fill="#f59a1a" stroke="#f59a1a" stroke-width="0.8" stroke-linejoin="round"/><polygon points="26.3,18.6 27.3,2.5 31.0,12.3" fill="url(#gStarO)" stroke="none" stroke-width="0.3"/><polygon points="26.3,18.6 31.0,12.3 41.8,14.4" fill="#ffdc00" stroke="#ffdc00" stroke-width="0.3"/><polygon points="26.3,18.6 41.8,14.4 33.8,20.6" fill="url(#gStarR)" stroke="none" stroke-width="0.3"/><polygon points="26.3,18.6 33.8,20.6 35.3,32.9" fill="#ffe200" stroke="#ffe200" stroke-width="0.3"/><polygon points="26.3,18.6 35.3,32.9 25.5,25.2" fill="#ffec00" stroke="#ffec00" stroke-width="0.3"/><polygon points="26.3,18.6 25.5,25.2 16.9,30.7" fill="#ffd000" stroke="#ffd000" stroke-width="0.3"/><polygon points="26.3,18.6 16.9,30.7 19.0,20.6" fill="#ffe000" stroke="#ffe000" stroke-width="0.3"/><polygon points="26.3,18.6 19.0,20.6 12.9,12.6" fill="#ffd400" stroke="#ffd400" stroke-width="0.3"/><polygon points="26.3,18.6 12.9,12.6 22.4,11.4" fill="#fff228" stroke="#fff228" stroke-width="0.3"/><polygon points="26.3,18.6 22.4,11.4 27.3,2.5" fill="#ffe000" stroke="#ffe000" stroke-width="0.3"/><path d="M27.9,4.0 L31.5,12.3" stroke="#f7831a" stroke-width="1.2" fill="none" opacity="0.8"/><path d="M34.1,20.6 L35.8,32.4" stroke="#f7831a" stroke-width="1.1" fill="none" opacity="0.7"/></svg><div class="tl" style="top:37px">CAB_2</div></div>
<div class="tile" style="left:704px;top:319px"><svg class="i" style="left:-1px;top:-1px" width="57" height="36" viewBox="0 0 57 36" ><ellipse cx="37" cy="21.6" rx="7" ry="1.5" fill="#8c8c98" opacity="0.5"/><polygon points="28.2,3.2 31.9,13.0 42.7,15.1 34.7,21.3 36.2,33.6 26.4,25.9 17.8,31.4 19.9,21.3 13.8,13.3 23.3,12.1" fill="#f59a1a" stroke="#f59a1a" stroke-width="0.8" stroke-linejoin="round"/><polygon points="26.3,18.6 27.3,2.5 31.0,12.3" fill="url(#gStarO)" stroke="none" stroke-width="0.3"/><polygon points="26.3,18.6 31.0,12.3 41.8,14.4" fill="#ffdc00" stroke="#ffdc00" stroke-width="0.3"/><polygon points="26.3,18.6 41.8,14.4 33.8,20.6" fill="url(#gStarR)" stroke="none" stroke-width="0.3"/><polygon points="26.3,18.6 33.8,20.6 35.3,32.9" fill="#ffe200" stroke="#ffe200" stroke-width="0.3"/><polygon points="26.3,18.6 35.3,32.9 25.5,25.2" fill="#ffec00" stroke="#ffec00" stroke-width="0.3"/><polygon points="26.3,18.6 25.5,25.2 16.9,30.7" fill="#ffd000" stroke="#ffd000" stroke-width="0.3"/><polygon points="26.3,18.6 16.9,30.7 19.0,20.6" fill="#ffe000" stroke="#ffe000" stroke-width="0.3"/><polygon points="26.3,18.6 19.0,20.6 12.9,12.6" fill="#ffd400" stroke="#ffd400" stroke-width="0.3"/><polygon points="26.3,18.6 12.9,12.6 22.4,11.4" fill="#fff228" stroke="#fff228" stroke-width="0.3"/><polygon points="26.3,18.6 22.4,11.4 27.3,2.5" fill="#ffe000" stroke="#ffe000" stroke-width="0.3"/><path d="M27.9,4.0 L31.5,12.3" stroke="#f7831a" stroke-width="1.2" fill="none" opacity="0.8"/><path d="M34.1,20.6 L35.8,32.4" stroke="#f7831a" stroke-width="1.1" fill="none" opacity="0.7"/></svg><div class="tl" style="top:37px">CAB_3A</div></div>
<div class="tile" style="left:784px;top:319px"><svg class="i" style="left:-1px;top:-1px" width="57" height="36" viewBox="0 0 57 36" ><ellipse cx="37" cy="21.6" rx="7" ry="1.5" fill="#8c8c98" opacity="0.5"/><polygon points="28.2,3.2 31.9,13.0 42.7,15.1 34.7,21.3 36.2,33.6 26.4,25.9 17.8,31.4 19.9,21.3 13.8,13.3 23.3,12.1" fill="#f59a1a" stroke="#f59a1a" stroke-width="0.8" stroke-linejoin="round"/><polygon points="26.3,18.6 27.3,2.5 31.0,12.3" fill="url(#gStarO)" stroke="none" stroke-width="0.3"/><polygon points="26.3,18.6 31.0,12.3 41.8,14.4" fill="#ffdc00" stroke="#ffdc00" stroke-width="0.3"/><polygon points="26.3,18.6 41.8,14.4 33.8,20.6" fill="url(#gStarR)" stroke="none" stroke-width="0.3"/><polygon points="26.3,18.6 33.8,20.6 35.3,32.9" fill="#ffe200" stroke="#ffe200" stroke-width="0.3"/><polygon points="26.3,18.6 35.3,32.9 25.5,25.2" fill="#ffec00" stroke="#ffec00" stroke-width="0.3"/><polygon points="26.3,18.6 25.5,25.2 16.9,30.7" fill="#ffd000" stroke="#ffd000" stroke-width="0.3"/><polygon points="26.3,18.6 16.9,30.7 19.0,20.6" fill="#ffe000" stroke="#ffe000" stroke-width="0.3"/><polygon points="26.3,18.6 19.0,20.6 12.9,12.6" fill="#ffd400" stroke="#ffd400" stroke-width="0.3"/><polygon points="26.3,18.6 12.9,12.6 22.4,11.4" fill="#fff228" stroke="#fff228" stroke-width="0.3"/><polygon points="26.3,18.6 22.4,11.4 27.3,2.5" fill="#ffe000" stroke="#ffe000" stroke-width="0.3"/><path d="M27.9,4.0 L31.5,12.3" stroke="#f7831a" stroke-width="1.2" fill="none" opacity="0.8"/><path d="M34.1,20.6 L35.8,32.4" stroke="#f7831a" stroke-width="1.1" fill="none" opacity="0.7"/></svg><div class="tl" style="top:37px">CAB_3B</div></div>
<div class="tile" style="left:864px;top:319px"><svg class="i" style="left:-1px;top:-1px" width="57" height="36" viewBox="0 0 57 36" ><ellipse cx="37" cy="21.6" rx="7" ry="1.5" fill="#8c8c98" opacity="0.5"/><polygon points="28.2,3.2 31.9,13.0 42.7,15.1 34.7,21.3 36.2,33.6 26.4,25.9 17.8,31.4 19.9,21.3 13.8,13.3 23.3,12.1" fill="#f59a1a" stroke="#f59a1a" stroke-width="0.8" stroke-linejoin="round"/><polygon points="26.3,18.6 27.3,2.5 31.0,12.3" fill="url(#gStarO)" stroke="none" stroke-width="0.3"/><polygon points="26.3,18.6 31.0,12.3 41.8,14.4" fill="#ffdc00" stroke="#ffdc00" stroke-width="0.3"/><polygon points="26.3,18.6 41.8,14.4 33.8,20.6" fill="url(#gStarR)" stroke="none" stroke-width="0.3"/><polygon points="26.3,18.6 33.8,20.6 35.3,32.9" fill="#ffe200" stroke="#ffe200" stroke-width="0.3"/><polygon points="26.3,18.6 35.3,32.9 25.5,25.2" fill="#ffec00" stroke="#ffec00" stroke-width="0.3"/><polygon points="26.3,18.6 25.5,25.2 16.9,30.7" fill="#ffd000" stroke="#ffd000" stroke-width="0.3"/><polygon points="26.3,18.6 16.9,30.7 19.0,20.6" fill="#ffe000" stroke="#ffe000" stroke-width="0.3"/><polygon points="26.3,18.6 19.0,20.6 12.9,12.6" fill="#ffd400" stroke="#ffd400" stroke-width="0.3"/><polygon points="26.3,18.6 12.9,12.6 22.4,11.4" fill="#fff228" stroke="#fff228" stroke-width="0.3"/><polygon points="26.3,18.6 22.4,11.4 27.3,2.5" fill="#ffe000" stroke="#ffe000" stroke-width="0.3"/><path d="M27.9,4.0 L31.5,12.3" stroke="#f7831a" stroke-width="1.2" fill="none" opacity="0.8"/><path d="M34.1,20.6 L35.8,32.4" stroke="#f7831a" stroke-width="1.1" fill="none" opacity="0.7"/></svg><div class="tl" style="top:37px">CAB_4</div></div>
<div class="tile" style="left:64px;top:409px"><svg class="i" style="left:-1px;top:-1px" width="57" height="36" viewBox="0 0 57 36" ><ellipse cx="37" cy="21.6" rx="7" ry="1.5" fill="#8c8c98" opacity="0.5"/><polygon points="28.2,3.2 31.9,13.0 42.7,15.1 34.7,21.3 36.2,33.6 26.4,25.9 17.8,31.4 19.9,21.3 13.8,13.3 23.3,12.1" fill="#f59a1a" stroke="#f59a1a" stroke-width="0.8" stroke-linejoin="round"/><polygon points="26.3,18.6 27.3,2.5 31.0,12.3" fill="url(#gStarO)" stroke="none" stroke-width="0.3"/><polygon points="26.3,18.6 31.0,12.3 41.8,14.4" fill="#ffdc00" stroke="#ffdc00" stroke-width="0.3"/><polygon points="26.3,18.6 41.8,14.4 33.8,20.6" fill="url(#gStarR)" stroke="none" stroke-width="0.3"/><polygon points="26.3,18.6 33.8,20.6 35.3,32.9" fill="#ffe200" stroke="#ffe200" stroke-width="0.3"/><polygon points="26.3,18.6 35.3,32.9 25.5,25.2" fill="#ffec00" stroke="#ffec00" stroke-width="0.3"/><polygon points="26.3,18.6 25.5,25.2 16.9,30.7" fill="#ffd000" stroke="#ffd000" stroke-width="0.3"/><polygon points="26.3,18.6 16.9,30.7 19.0,20.6" fill="#ffe000" stroke="#ffe000" stroke-width="0.3"/><polygon points="26.3,18.6 19.0,20.6 12.9,12.6" fill="#ffd400" stroke="#ffd400" stroke-width="0.3"/><polygon points="26.3,18.6 12.9,12.6 22.4,11.4" fill="#fff228" stroke="#fff228" stroke-width="0.3"/><polygon points="26.3,18.6 22.4,11.4 27.3,2.5" fill="#ffe000" stroke="#ffe000" stroke-width="0.3"/><path d="M27.9,4.0 L31.5,12.3" stroke="#f7831a" stroke-width="1.2" fill="none" opacity="0.8"/><path d="M34.1,20.6 L35.8,32.4" stroke="#f7831a" stroke-width="1.1" fill="none" opacity="0.7"/></svg><div class="tl2" style="top:30.5px">CAMPING_</div><div class="tl2" style="top:44px;left:-10px">1</div></div>
<div class="tile" style="left:144px;top:409px"><svg class="i" style="left:-1px;top:-1px" width="57" height="36" viewBox="0 0 57 36" ><ellipse cx="37" cy="21.6" rx="7" ry="1.5" fill="#8c8c98" opacity="0.5"/><polygon points="28.2,3.2 31.9,13.0 42.7,15.1 34.7,21.3 36.2,33.6 26.4,25.9 17.8,31.4 19.9,21.3 13.8,13.3 23.3,12.1" fill="#f59a1a" stroke="#f59a1a" stroke-width="0.8" stroke-linejoin="round"/><polygon points="26.3,18.6 27.3,2.5 31.0,12.3" fill="url(#gStarO)" stroke="none" stroke-width="0.3"/><polygon points="26.3,18.6 31.0,12.3 41.8,14.4" fill="#ffdc00" stroke="#ffdc00" stroke-width="0.3"/><polygon points="26.3,18.6 41.8,14.4 33.8,20.6" fill="url(#gStarR)" stroke="none" stroke-width="0.3"/><polygon points="26.3,18.6 33.8,20.6 35.3,32.9" fill="#ffe200" stroke="#ffe200" stroke-width="0.3"/><polygon points="26.3,18.6 35.3,32.9 25.5,25.2" fill="#ffec00" stroke="#ffec00" stroke-width="0.3"/><polygon points="26.3,18.6 25.5,25.2 16.9,30.7" fill="#ffd000" stroke="#ffd000" stroke-width="0.3"/><polygon points="26.3,18.6 16.9,30.7 19.0,20.6" fill="#ffe000" stroke="#ffe000" stroke-width="0.3"/><polygon points="26.3,18.6 19.0,20.6 12.9,12.6" fill="#ffd400" stroke="#ffd400" stroke-width="0.3"/><polygon points="26.3,18.6 12.9,12.6 22.4,11.4" fill="#fff228" stroke="#fff228" stroke-width="0.3"/><polygon points="26.3,18.6 22.4,11.4 27.3,2.5" fill="#ffe000" stroke="#ffe000" stroke-width="0.3"/><path d="M27.9,4.0 L31.5,12.3" stroke="#f7831a" stroke-width="1.2" fill="none" opacity="0.8"/><path d="M34.1,20.6 L35.8,32.4" stroke="#f7831a" stroke-width="1.1" fill="none" opacity="0.7"/></svg><div class="tl2" style="top:30.5px">CAMPING_</div><div class="tl2" style="top:44px;left:-10px">2</div></div>
<div class="tile" style="left:224px;top:409px"><svg class="i" style="left:-1px;top:-1px" width="57" height="36" viewBox="0 0 57 36" ><ellipse cx="37" cy="21.6" rx="7" ry="1.5" fill="#8c8c98" opacity="0.5"/><polygon points="28.2,3.2 31.9,13.0 42.7,15.1 34.7,21.3 36.2,33.6 26.4,25.9 17.8,31.4 19.9,21.3 13.8,13.3 23.3,12.1" fill="#f59a1a" stroke="#f59a1a" stroke-width="0.8" stroke-linejoin="round"/><polygon points="26.3,18.6 27.3,2.5 31.0,12.3" fill="url(#gStarO)" stroke="none" stroke-width="0.3"/><polygon points="26.3,18.6 31.0,12.3 41.8,14.4" fill="#ffdc00" stroke="#ffdc00" stroke-width="0.3"/><polygon points="26.3,18.6 41.8,14.4 33.8,20.6" fill="url(#gStarR)" stroke="none" stroke-width="0.3"/><polygon points="26.3,18.6 33.8,20.6 35.3,32.9" fill="#ffe200" stroke="#ffe200" stroke-width="0.3"/><polygon points="26.3,18.6 35.3,32.9 25.5,25.2" fill="#ffec00" stroke="#ffec00" stroke-width="0.3"/><polygon points="26.3,18.6 25.5,25.2 16.9,30.7" fill="#ffd000" stroke="#ffd000" stroke-width="0.3"/><polygon points="26.3,18.6 16.9,30.7 19.0,20.6" fill="#ffe000" stroke="#ffe000" stroke-width="0.3"/><polygon points="26.3,18.6 19.0,20.6 12.9,12.6" fill="#ffd400" stroke="#ffd400" stroke-width="0.3"/><polygon points="26.3,18.6 12.9,12.6 22.4,11.4" fill="#fff228" stroke="#fff228" stroke-width="0.3"/><polygon points="26.3,18.6 22.4,11.4 27.3,2.5" fill="#ffe000" stroke="#ffe000" stroke-width="0.3"/><path d="M27.9,4.0 L31.5,12.3" stroke="#f7831a" stroke-width="1.2" fill="none" opacity="0.8"/><path d="M34.1,20.6 L35.8,32.4" stroke="#f7831a" stroke-width="1.1" fill="none" opacity="0.7"/></svg><div class="tl2" style="top:30.5px">CAMPING_</div><div class="tl2" style="top:44px;left:-10px">3</div></div>
<div class="tile" style="left:304px;top:409px"><svg class="i" style="left:-1px;top:-1px" width="57" height="36" viewBox="0 0 57 36" ><ellipse cx="37" cy="21.6" rx="7" ry="1.5" fill="#8c8c98" opacity="0.5"/><polygon points="28.2,3.2 31.9,13.0 42.7,15.1 34.7,21.3 36.2,33.6 26.4,25.9 17.8,31.4 19.9,21.3 13.8,13.3 23.3,12.1" fill="#f59a1a" stroke="#f59a1a" stroke-width="0.8" stroke-linejoin="round"/><polygon points="26.3,18.6 27.3,2.5 31.0,12.3" fill="url(#gStarO)" stroke="none" stroke-width="0.3"/><polygon points="26.3,18.6 31.0,12.3 41.8,14.4" fill="#ffdc00" stroke="#ffdc00" stroke-width="0.3"/><polygon points="26.3,18.6 41.8,14.4 33.8,20.6" fill="url(#gStarR)" stroke="none" stroke-width="0.3"/><polygon points="26.3,18.6 33.8,20.6 35.3,32.9" fill="#ffe200" stroke="#ffe200" stroke-width="0.3"/><polygon points="26.3,18.6 35.3,32.9 25.5,25.2" fill="#ffec00" stroke="#ffec00" stroke-width="0.3"/><polygon points="26.3,18.6 25.5,25.2 16.9,30.7" fill="#ffd000" stroke="#ffd000" stroke-width="0.3"/><polygon points="26.3,18.6 16.9,30.7 19.0,20.6" fill="#ffe000" stroke="#ffe000" stroke-width="0.3"/><polygon points="26.3,18.6 19.0,20.6 12.9,12.6" fill="#ffd400" stroke="#ffd400" stroke-width="0.3"/><polygon points="26.3,18.6 12.9,12.6 22.4,11.4" fill="#fff228" stroke="#fff228" stroke-width="0.3"/><polygon points="26.3,18.6 22.4,11.4 27.3,2.5" fill="#ffe000" stroke="#ffe000" stroke-width="0.3"/><path d="M27.9,4.0 L31.5,12.3" stroke="#f7831a" stroke-width="1.2" fill="none" opacity="0.8"/><path d="M34.1,20.6 L35.8,32.4" stroke="#f7831a" stroke-width="1.1" fill="none" opacity="0.7"/></svg><div class="tl2" style="top:30.5px">CAMPING_</div><div class="tl2" style="top:44px;left:-10px">4</div></div>
<div class="tile" style="left:384px;top:409px"><svg class="i" style="left:-1px;top:-1px" width="57" height="36" viewBox="0 0 57 36" ><ellipse cx="37" cy="21.6" rx="7" ry="1.5" fill="#8c8c98" opacity="0.5"/><polygon points="28.2,3.2 31.9,13.0 42.7,15.1 34.7,21.3 36.2,33.6 26.4,25.9 17.8,31.4 19.9,21.3 13.8,13.3 23.3,12.1" fill="#f59a1a" stroke="#f59a1a" stroke-width="0.8" stroke-linejoin="round"/><polygon points="26.3,18.6 27.3,2.5 31.0,12.3" fill="url(#gStarO)" stroke="none" stroke-width="0.3"/><polygon points="26.3,18.6 31.0,12.3 41.8,14.4" fill="#ffdc00" stroke="#ffdc00" stroke-width="0.3"/><polygon points="26.3,18.6 41.8,14.4 33.8,20.6" fill="url(#gStarR)" stroke="none" stroke-width="0.3"/><polygon points="26.3,18.6 33.8,20.6 35.3,32.9" fill="#ffe200" stroke="#ffe200" stroke-width="0.3"/><polygon points="26.3,18.6 35.3,32.9 25.5,25.2" fill="#ffec00" stroke="#ffec00" stroke-width="0.3"/><polygon points="26.3,18.6 25.5,25.2 16.9,30.7" fill="#ffd000" stroke="#ffd000" stroke-width="0.3"/><polygon points="26.3,18.6 16.9,30.7 19.0,20.6" fill="#ffe000" stroke="#ffe000" stroke-width="0.3"/><polygon points="26.3,18.6 19.0,20.6 12.9,12.6" fill="#ffd400" stroke="#ffd400" stroke-width="0.3"/><polygon points="26.3,18.6 12.9,12.6 22.4,11.4" fill="#fff228" stroke="#fff228" stroke-width="0.3"/><polygon points="26.3,18.6 22.4,11.4 27.3,2.5" fill="#ffe000" stroke="#ffe000" stroke-width="0.3"/><path d="M27.9,4.0 L31.5,12.3" stroke="#f7831a" stroke-width="1.2" fill="none" opacity="0.8"/><path d="M34.1,20.6 L35.8,32.4" stroke="#f7831a" stroke-width="1.1" fill="none" opacity="0.7"/></svg><div class="tl2" style="top:30.5px">CAMPING_</div><div class="tl2" style="top:44px;left:-10px">5</div></div>
<div class="tile" style="left:464px;top:409px"><svg class="i" style="left:-1px;top:-1px" width="57" height="36" viewBox="0 0 57 36" ><ellipse cx="37" cy="21.6" rx="7" ry="1.5" fill="#8c8c98" opacity="0.5"/><polygon points="28.2,3.2 31.9,13.0 42.7,15.1 34.7,21.3 36.2,33.6 26.4,25.9 17.8,31.4 19.9,21.3 13.8,13.3 23.3,12.1" fill="#f59a1a" stroke="#f59a1a" stroke-width="0.8" stroke-linejoin="round"/><polygon points="26.3,18.6 27.3,2.5 31.0,12.3" fill="url(#gStarO)" stroke="none" stroke-width="0.3"/><polygon points="26.3,18.6 31.0,12.3 41.8,14.4" fill="#ffdc00" stroke="#ffdc00" stroke-width="0.3"/><polygon points="26.3,18.6 41.8,14.4 33.8,20.6" fill="url(#gStarR)" stroke="none" stroke-width="0.3"/><polygon points="26.3,18.6 33.8,20.6 35.3,32.9" fill="#ffe200" stroke="#ffe200" stroke-width="0.3"/><polygon points="26.3,18.6 35.3,32.9 25.5,25.2" fill="#ffec00" stroke="#ffec00" stroke-width="0.3"/><polygon points="26.3,18.6 25.5,25.2 16.9,30.7" fill="#ffd000" stroke="#ffd000" stroke-width="0.3"/><polygon points="26.3,18.6 16.9,30.7 19.0,20.6" fill="#ffe000" stroke="#ffe000" stroke-width="0.3"/><polygon points="26.3,18.6 19.0,20.6 12.9,12.6" fill="#ffd400" stroke="#ffd400" stroke-width="0.3"/><polygon points="26.3,18.6 12.9,12.6 22.4,11.4" fill="#fff228" stroke="#fff228" stroke-width="0.3"/><polygon points="26.3,18.6 22.4,11.4 27.3,2.5" fill="#ffe000" stroke="#ffe000" stroke-width="0.3"/><path d="M27.9,4.0 L31.5,12.3" stroke="#f7831a" stroke-width="1.2" fill="none" opacity="0.8"/><path d="M34.1,20.6 L35.8,32.4" stroke="#f7831a" stroke-width="1.1" fill="none" opacity="0.7"/></svg><div class="tl2" style="top:30.5px">CAMPING_</div><div class="tl2" style="top:44px;left:-10px">6</div></div>
<div class="a" style="left:0;top:1021px;width:1130px;height:19px;border-top:1px solid #d7d7d7;background:#f0f0f0;"></div>
<div class="a" style="left:0;top:1040px;width:1130px;height:1px;background:#16222e;"></div>
<div class="a" style="left:399px;top:1023px;width:1px;height:16px;background:#d2d2d2;"></div>
<div class="a" style="left:539px;top:1023px;width:1px;height:16px;background:#d2d2d2;"></div>
<div class="a" style="left:809px;top:1023px;width:1px;height:16px;background:#d2d2d2;"></div>
<span class="t" style="left:2.30px;top:1024.00px;font-size:12px;line-height:16px;letter-spacing:-0.262px;color:#000;">Punto de Venta:</span>
<span class="t" style="left:85.50px;top:1024.00px;font-size:12px;line-height:16px;letter-spacing:-1.150px;color:#000;">RESTAURANTE</span>
<span class="t" style="left:404.30px;top:1024.00px;font-size:12px;line-height:16px;letter-spacing:-0.344px;color:#000;">24/09/2019</span>
<span class="t" style="left:465.40px;top:1024.00px;font-size:12px;line-height:16px;letter-spacing:-0.850px;color:#000;">6:45:23</span>
<span class="t" style="left:504.80px;top:1024.00px;font-size:12px;line-height:16px;letter-spacing:-0.258px;color:#000;">p.m.</span>
<span class="t" style="left:544.10px;top:1024.00px;font-size:12px;line-height:16px;letter-spacing:0.033px;color:#000;">Administrador:</span>
<span class="t" style="left:626.30px;top:1024.00px;font-size:12px;line-height:16px;letter-spacing:-0.610px;color:#000;">ADMINISTRADOR</span>
<span class="t" style="left:814.00px;top:1024.00px;font-size:12px;line-height:16px;letter-spacing:-0.425px;color:#000;">Versión: 7.0.1.7</span>
<div class="a" style="left:0;top:42px;width:217px;height:134px;border:1px solid #a0a0a0;background:#f2f2f2;box-shadow:2px 2px 3px rgba(0,0,0,0.6);"></div>
<div class="a" style="left:3px;top:45px;width:211px;height:22px;background:#91c9f7;"></div>
<div class="sep" style="top:91px"></div><div class="sep" style="top:119px"></div><div class="sep" style="top:147px"></div>
<svg class="i" style="left:6px;top:49px" width="16" height="15" viewBox="0 0 16 15" ><rect x="0.5" y="0.5" width="12.5" height="12.5" fill="#fff" stroke="#7aa7e0" stroke-width="1"/><rect x="1.6" y="1.6" width="10.3" height="1.3" fill="#6cc04a"/><rect x="1.6" y="3.2" width="10.3" height="8.6" fill="#c3d8f5"/><rect x="2.4" y="4.5" width="2" height="1" fill="#8fb4ea"/><rect x="5.4" y="4.5" width="3" height="1" fill="#8fb4ea"/><rect x="2.4" y="6.7" width="2" height="1" fill="#8fb4ea"/><rect x="5.4" y="6.7" width="3" height="1" fill="#8fb4ea"/><rect x="2.4" y="8.9" width="2" height="1" fill="#8fb4ea"/><rect x="5.4" y="8.9" width="3" height="1" fill="#8fb4ea"/><path d="M13.80,8.98 L15.56,9.14 L15.56,10.46 L13.80,10.62 L13.63,11.14 L13.39,11.62 L14.51,12.98 L13.58,13.91 L12.22,12.79 L11.74,13.03 L11.22,13.20 L11.06,14.96 L9.74,14.96 L9.58,13.20 L9.06,13.03 L8.58,12.79 L7.22,13.91 L6.29,12.98 L7.41,11.62 L7.17,11.14 L7.00,10.62 L5.24,10.46 L5.24,9.14 L7.00,8.98 L7.17,8.46 L7.41,7.98 L6.29,6.62 L7.22,5.69 L8.58,6.81 L9.06,6.57 L9.58,6.40 L9.74,4.64 L11.06,4.64 L11.22,6.40 L11.74,6.57 L12.22,6.81 L13.58,5.69 L14.51,6.62 L13.39,7.98 L13.63,8.46Z M8.90,9.80 a1.50,1.50 0 1,0 3.00,0 a1.50,1.50 0 1,0 -3.00,0Z" transform="translate(0.4 0.4)" fill="#666" opacity="0.5" fill-rule="evenodd"/><path d="M13.80,8.98 L15.56,9.14 L15.56,10.46 L13.80,10.62 L13.63,11.14 L13.39,11.62 L14.51,12.98 L13.58,13.91 L12.22,12.79 L11.74,13.03 L11.22,13.20 L11.06,14.96 L9.74,14.96 L9.58,13.20 L9.06,13.03 L8.58,12.79 L7.22,13.91 L6.29,12.98 L7.41,11.62 L7.17,11.14 L7.00,10.62 L5.24,10.46 L5.24,9.14 L7.00,8.98 L7.17,8.46 L7.41,7.98 L6.29,6.62 L7.22,5.69 L8.58,6.81 L9.06,6.57 L9.58,6.40 L9.74,4.64 L11.06,4.64 L11.22,6.40 L11.74,6.57 L12.22,6.81 L13.58,5.69 L14.51,6.62 L13.39,7.98 L13.63,8.46Z M8.90,9.80 a1.50,1.50 0 1,0 3.00,0 a1.50,1.50 0 1,0 -3.00,0Z" fill="#dadada" stroke="#909090" stroke-width="0.5" fill-rule="evenodd"/></svg>
<svg class="i" style="left:6px;top:70px" width="16" height="16" viewBox="0 0 16 16" ><path d="M13.43,6.64 L15.93,6.91 L15.93,9.09 L13.43,9.36 L13.17,10.14 L12.80,10.88 L14.38,12.83 L12.83,14.38 L10.88,12.80 L10.14,13.17 L9.36,13.43 L9.09,15.93 L6.91,15.93 L6.64,13.43 L5.86,13.17 L5.12,12.80 L3.17,14.38 L1.62,12.83 L3.20,10.88 L2.83,10.14 L2.57,9.36 L0.07,9.09 L0.07,6.91 L2.57,6.64 L2.83,5.86 L3.20,5.12 L1.62,3.17 L3.17,1.62 L5.12,3.20 L5.86,2.83 L6.64,2.57 L6.91,0.07 L9.09,0.07 L9.36,2.57 L10.14,2.83 L10.88,3.20 L12.83,1.62 L14.38,3.17 L12.80,5.12 L13.17,5.86Z M5.70,8.00 a2.30,2.30 0 1,0 4.60,0 a2.30,2.30 0 1,0 -4.60,0Z" transform="translate(0.5 0.5)" fill="#777" opacity="0.55" fill-rule="evenodd"/><path d="M13.43,6.64 L15.93,6.91 L15.93,9.09 L13.43,9.36 L13.17,10.14 L12.80,10.88 L14.38,12.83 L12.83,14.38 L10.88,12.80 L10.14,13.17 L9.36,13.43 L9.09,15.93 L6.91,15.93 L6.64,13.43 L5.86,13.17 L5.12,12.80 L3.17,14.38 L1.62,12.83 L3.20,10.88 L2.83,10.14 L2.57,9.36 L0.07,9.09 L0.07,6.91 L2.57,6.64 L2.83,5.86 L3.20,5.12 L1.62,3.17 L3.17,1.62 L5.12,3.20 L5.86,2.83 L6.64,2.57 L6.91,0.07 L9.09,0.07 L9.36,2.57 L10.14,2.83 L10.88,3.20 L12.83,1.62 L14.38,3.17 L12.80,5.12 L13.17,5.86Z M5.70,8.00 a2.30,2.30 0 1,0 4.60,0 a2.30,2.30 0 1,0 -4.60,0Z" fill="url(#gGear)" stroke="#a2a2a2" stroke-width="0.5" fill-rule="evenodd"/><circle cx="8" cy="8" r="4.3" fill="none" stroke="#f0f0f0" stroke-width="0.9" opacity="0.75"/></svg>
<svg class="i" style="left:7px;top:99px" width="14" height="14" viewBox="0 0 14 14" ><circle cx="7" cy="7" r="6.6" fill="url(#gGreen)" stroke="#2f8a2d" stroke-width="0.8"/><circle cx="7" cy="7" r="5.3" fill="none" stroke="#a8e0a4" stroke-width="0.7" opacity="0.8"/><path d="M3.8,7.2 L6.1,9.4 L10.4,4.8" fill="none" stroke="#fff" stroke-width="1.9" stroke-linecap="round" stroke-linejoin="round"/></svg>
<svg class="i" style="left:7px;top:127px" width="14" height="14" viewBox="0 0 14 14" ><rect x="0.5" y="0.5" width="13" height="13" fill="#fff" stroke="#6f9ad6"/><rect x="2" y="2" width="10" height="3" fill="#ff9d45"/><rect x="2" y="2.8" width="10" height="0.8" fill="#ffbf7a"/><rect x="2" y="5.6" width="10" height="6.2" fill="#c9dbf5"/><rect x="4.2" y="5.6" width="0.7" height="6.2" fill="#fff"/><rect x="6.7" y="5.6" width="0.7" height="6.2" fill="#fff"/><rect x="9.2" y="5.6" width="0.7" height="6.2" fill="#fff"/><rect x="2" y="7.3" width="10" height="0.7" fill="#fff"/><rect x="2" y="9.4" width="10" height="0.7" fill="#fff"/></svg>
<svg class="i" style="left:7px;top:155px" width="14" height="14" viewBox="0 0 14 14" ><polygon points="4.2,0.2 9.8,0.2 13.8,4.2 13.8,9.8 9.8,13.8 4.2,13.8 0.2,9.8 0.2,4.2" fill="#ef1c1c"/><polygon points="4.6,1.2 9.4,1.2 12.8,4.6 12.8,7 1.2,7 1.2,4.6" fill="#f44" opacity="0.45"/><path d="M4.2,4.2 L9.8,9.8 M9.8,4.2 L4.2,9.8" stroke="#fff" stroke-width="2.1" stroke-linecap="round"/><circle cx="7" cy="7" r="1.6" fill="#fde0e0"/></svg>
<span class="t" style="left:34.00px;top:48.00px;font-size:12px;line-height:16px;letter-spacing:0.167px;color:#000;">Configuración</span>
<span class="t" style="left:34.00px;top:70.00px;font-size:12px;line-height:16px;letter-spacing:-0.198px;color:#000;">Utilidades de la base de datos</span>
<span class="t" style="left:34.00px;top:98.00px;font-size:12px;line-height:16px;letter-spacing:-0.028px;color:#000;">Actualizar programa</span>
<span class="t" style="left:34.00px;top:126.00px;font-size:12px;line-height:16px;letter-spacing:-0.113px;color:#000;">Calculadora</span>
<span class="t" style="left:158.80px;top:126.00px;font-size:12px;line-height:16px;letter-spacing:-0.231px;color:#000;">Ctrl+</span>
<span class="t" style="left:185.80px;top:126.00px;font-size:12px;line-height:16px;letter-spacing:-1.425px;color:#000;">C</span>
<span class="t" style="left:34.00px;top:154.00px;font-size:12px;line-height:16px;letter-spacing:-0.500px;color:#000;">Salir</span>
<div class="a" style="left:2px;top:45px;width:211px;height:21px;border:3px solid #ff0000;border-radius:2px;"></div>
<div class="a" style="left:0;top:20px;width:55px;height:23px;border:3px solid #ff0000;border-radius:2px;background:#cce8ff;"></div>
<span class="t" style="left:7.00px;top:24.50px;font-size:12px;line-height:16px;letter-spacing:0.000px;color:#000;">Archivo</span>
</body></html>
